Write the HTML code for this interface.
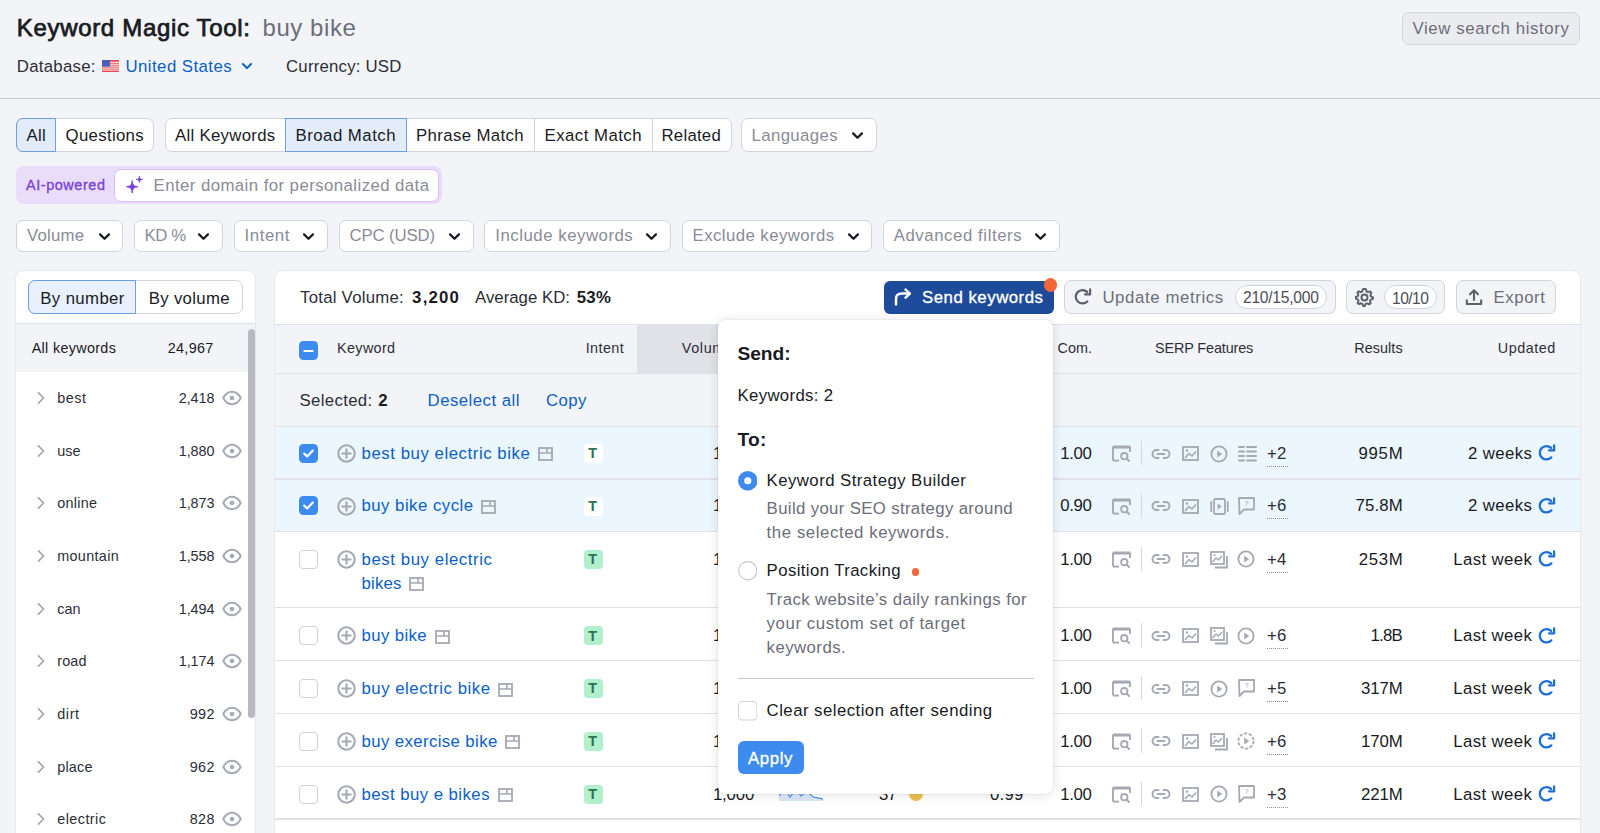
<!DOCTYPE html>
<html><head><meta charset="utf-8"><title>Keyword Magic Tool</title>
<style>
html,body{margin:0;padding:0;}
body{width:1600px;height:833px;overflow:hidden;position:relative;background:#f3f4f8;font-family:"Liberation Sans", sans-serif;}
</style></head><body>
<span id="t0" style="position:absolute;left:16.80px;top:8.200000000000003px;font-size:24px;line-height:40px;font-weight:400;color:#191b23;white-space:nowrap;letter-spacing:0.674px;-webkit-text-stroke:0.75px #191b23;">Keyword Magic Tool:</span>
<span id="t1" style="position:absolute;left:262.50px;top:8.200000000000003px;font-size:24px;line-height:40px;font-weight:400;color:#6c6e79;white-space:nowrap;letter-spacing:0.564px;">buy bike</span>
<span id="t2" style="position:absolute;left:16.80px;top:47.2px;font-size:16.8px;line-height:40px;font-weight:400;color:#2c2e37;white-space:nowrap;letter-spacing:0.278px;">Database:</span>
<svg style="position:absolute;left:102px;top:60px;" width="17" height="12" viewBox="0 0 17 12"><rect width="17" height="12" fill="#e84a4f"/><rect y="1.8" width="17" height="0.95" fill="#fff"/><rect y="3.75" width="17" height="0.95" fill="#fff"/><rect y="5.7" width="17" height="0.95" fill="#fff"/><rect y="7.65" width="17" height="0.95" fill="#fff"/><rect y="9.6" width="17" height="0.95" fill="#fff"/><rect width="8" height="6.6" fill="#4a5fb5"/></svg>
<span id="t3" style="position:absolute;left:125.50px;top:47.2px;font-size:16.8px;line-height:40px;font-weight:400;color:#0a5fc7;white-space:nowrap;letter-spacing:0.442px;">United States</span>
<svg style="position:absolute;left:241px;top:60px;" width="12" height="12" viewBox="0 0 12 12"><path d="M1.9 4 L6 8.1 L10.1 4" fill="none" stroke="#0a5fc7" stroke-width="2" stroke-linecap="round" stroke-linejoin="round"/></svg>
<span id="t4" style="position:absolute;left:286.00px;top:47.2px;font-size:16.8px;line-height:40px;font-weight:400;color:#2c2e37;white-space:nowrap;letter-spacing:0.212px;">Currency: USD</span>
<div style="position:absolute;left:1401.5px;top:12px;width:178.5px;height:33px;background:#ebecf0;border:1px solid #d3d5dc;border-radius:7px;box-sizing:border-box;"></div>
<span id="t5" style="position:absolute;left:1412.50px;top:9.399999999999999px;font-size:16.8px;line-height:40px;font-weight:400;color:#6c6e79;white-space:nowrap;letter-spacing:0.621px;">View search history</span>
<div style="position:absolute;left:0px;top:97.6px;width:1600px;height:1.6px;background:#c9cbd2;border-radius:0;box-sizing:border-box;"></div>
<div style="position:absolute;left:16.3px;top:118px;width:138.0px;height:34px;background:#fff;border:1px solid #d1d4db;border-radius:7px;box-sizing:border-box;"></div>
<div style="position:absolute;left:16.3px;top:118px;width:39.3px;height:34px;background:#e3ecfa;border:1px solid #6d9de6;border-radius:7px 0 0 7px;box-sizing:border-box;"></div>
<span id="t6" style="position:absolute;left:26.50px;top:115.6px;font-size:16.8px;line-height:40px;font-weight:400;color:#191b23;white-space:nowrap;letter-spacing:0.281px;">All</span>
<span id="t7" style="position:absolute;left:65.50px;top:115.6px;font-size:16.8px;line-height:40px;font-weight:400;color:#191b23;white-space:nowrap;letter-spacing:0.326px;">Questions</span>
<div style="position:absolute;left:164.6px;top:118px;width:567.0px;height:34px;background:#fff;border:1px solid #d1d4db;border-radius:7px;box-sizing:border-box;"></div>
<div style="position:absolute;left:285.3px;top:118px;width:121.30000000000001px;height:34px;background:#e3ecfa;border:1px solid #6d9de6;border-radius:0;box-sizing:border-box;"></div>
<div style="position:absolute;left:534.4px;top:118px;width:1px;height:34px;background:#d1d4db;border-radius:0;box-sizing:border-box;"></div>
<div style="position:absolute;left:651.7px;top:118px;width:1px;height:34px;background:#d1d4db;border-radius:0;box-sizing:border-box;"></div>
<span id="t8" style="position:absolute;left:175.00px;top:115.6px;font-size:16.8px;line-height:40px;font-weight:400;color:#191b23;white-space:nowrap;letter-spacing:0.292px;">All Keywords</span>
<span id="t9" style="position:absolute;left:295.50px;top:115.6px;font-size:16.8px;line-height:40px;font-weight:400;color:#191b23;white-space:nowrap;letter-spacing:0.487px;">Broad Match</span>
<span id="t10" style="position:absolute;left:416.00px;top:115.6px;font-size:16.8px;line-height:40px;font-weight:400;color:#191b23;white-space:nowrap;letter-spacing:0.372px;">Phrase Match</span>
<span id="t11" style="position:absolute;left:544.50px;top:115.6px;font-size:16.8px;line-height:40px;font-weight:400;color:#191b23;white-space:nowrap;letter-spacing:0.469px;">Exact Match</span>
<span id="t12" style="position:absolute;left:661.50px;top:115.6px;font-size:16.8px;line-height:40px;font-weight:400;color:#191b23;white-space:nowrap;letter-spacing:0.237px;">Related</span>
<div style="position:absolute;left:741.4px;top:118px;width:135.8px;height:34px;background:#fff;border:1px solid #d1d4db;border-radius:7px;box-sizing:border-box;"></div>
<span id="t13" style="position:absolute;left:751.50px;top:115.6px;font-size:16.8px;line-height:40px;font-weight:400;color:#8a8c96;white-space:nowrap;letter-spacing:0.382px;">Languages</span>
<svg style="position:absolute;left:850.5px;top:129px;" width="13" height="13" viewBox="0 0 12 12"><path d="M1.9 4 L6 8.1 L10.1 4" fill="none" stroke="#191b23" stroke-width="2.1" stroke-linecap="round" stroke-linejoin="round"/></svg>
<div style="position:absolute;left:16.3px;top:166px;width:425.4px;height:38px;background:#eadcfb;border-radius:8px;box-sizing:border-box;"></div>
<span id="t14" style="position:absolute;left:26.00px;top:164.5px;font-size:14.4px;line-height:40px;font-weight:400;color:#7942d6;white-space:nowrap;letter-spacing:0.591px;-webkit-text-stroke:0.35px #7942d6;">AI-powered</span>
<div style="position:absolute;left:114px;top:169px;width:325px;height:32.5px;background:#fff;border:1.5px solid #d9bdf8;border-radius:7px;box-sizing:border-box;"></div>
<svg style="position:absolute;left:124.5px;top:175px;" width="19" height="19" viewBox="0 0 19 19"><path d="M7.2 5.6 C7.7 10 8.6 11.2 13 11.8 C8.6 12.4 7.7 13.6 7.2 18 C6.7 13.6 5.8 12.4 1.4 11.8 C5.8 11.2 6.7 10 7.2 5.6 Z" fill="#7942d6" stroke="#7942d6" stroke-width="0.9" stroke-linejoin="round"/><path d="M14.4 1.2 C14.7 3.6 15.2 4.1 17.6 4.4 C15.2 4.7 14.7 5.2 14.4 7.6 C14.1 5.2 13.6 4.7 11.2 4.4 C13.6 4.1 14.1 3.6 14.4 1.2 Z" fill="#7942d6" stroke="#7942d6" stroke-width="0.8" stroke-linejoin="round"/></svg>
<span id="t15" style="position:absolute;left:153.50px;top:166px;font-size:16.8px;line-height:40px;font-weight:400;color:#8a8c96;white-space:nowrap;letter-spacing:0.435px;">Enter domain for personalized data</span>
<div style="position:absolute;left:15.9px;top:219.5px;width:107.6px;height:32.5px;background:#fff;border:1px solid #d1d4db;border-radius:7px;box-sizing:border-box;"></div>
<span id="t16" style="position:absolute;left:26.90px;top:215.8px;font-size:16.8px;line-height:40px;font-weight:400;color:#8a8c96;white-space:nowrap;letter-spacing:0.253px;">Volume</span>
<svg style="position:absolute;left:97.5px;top:229.5px;" width="13" height="13" viewBox="0 0 12 12"><path d="M1.9 4 L6 8.1 L10.1 4" fill="none" stroke="#191b23" stroke-width="2.1" stroke-linecap="round" stroke-linejoin="round"/></svg>
<div style="position:absolute;left:133.6px;top:219.5px;width:89.80000000000001px;height:32.5px;background:#fff;border:1px solid #d1d4db;border-radius:7px;box-sizing:border-box;"></div>
<span id="t17" style="position:absolute;left:144.60px;top:215.8px;font-size:16.8px;line-height:40px;font-weight:400;color:#8a8c96;white-space:nowrap;letter-spacing:-0.477px;">KD %</span>
<svg style="position:absolute;left:197.4px;top:229.5px;" width="13" height="13" viewBox="0 0 12 12"><path d="M1.9 4 L6 8.1 L10.1 4" fill="none" stroke="#191b23" stroke-width="2.1" stroke-linecap="round" stroke-linejoin="round"/></svg>
<div style="position:absolute;left:233.5px;top:219.5px;width:94.5px;height:32.5px;background:#fff;border:1px solid #d1d4db;border-radius:7px;box-sizing:border-box;"></div>
<span id="t18" style="position:absolute;left:244.50px;top:215.8px;font-size:16.8px;line-height:40px;font-weight:400;color:#8a8c96;white-space:nowrap;letter-spacing:0.583px;">Intent</span>
<svg style="position:absolute;left:302px;top:229.5px;" width="13" height="13" viewBox="0 0 12 12"><path d="M1.9 4 L6 8.1 L10.1 4" fill="none" stroke="#191b23" stroke-width="2.1" stroke-linecap="round" stroke-linejoin="round"/></svg>
<div style="position:absolute;left:338.5px;top:219.5px;width:135.3px;height:32.5px;background:#fff;border:1px solid #d1d4db;border-radius:7px;box-sizing:border-box;"></div>
<span id="t19" style="position:absolute;left:349.50px;top:215.8px;font-size:16.8px;line-height:40px;font-weight:400;color:#8a8c96;white-space:nowrap;letter-spacing:-0.134px;">CPC (USD)</span>
<svg style="position:absolute;left:447.8px;top:229.5px;" width="13" height="13" viewBox="0 0 12 12"><path d="M1.9 4 L6 8.1 L10.1 4" fill="none" stroke="#191b23" stroke-width="2.1" stroke-linecap="round" stroke-linejoin="round"/></svg>
<div style="position:absolute;left:484.3px;top:219.5px;width:186.3px;height:32.5px;background:#fff;border:1px solid #d1d4db;border-radius:7px;box-sizing:border-box;"></div>
<span id="t20" style="position:absolute;left:495.30px;top:215.8px;font-size:16.8px;line-height:40px;font-weight:400;color:#8a8c96;white-space:nowrap;letter-spacing:0.521px;">Include keywords</span>
<svg style="position:absolute;left:644.6px;top:229.5px;" width="13" height="13" viewBox="0 0 12 12"><path d="M1.9 4 L6 8.1 L10.1 4" fill="none" stroke="#191b23" stroke-width="2.1" stroke-linecap="round" stroke-linejoin="round"/></svg>
<div style="position:absolute;left:681.6px;top:219.5px;width:190.89999999999998px;height:32.5px;background:#fff;border:1px solid #d1d4db;border-radius:7px;box-sizing:border-box;"></div>
<span id="t21" style="position:absolute;left:692.60px;top:215.8px;font-size:16.8px;line-height:40px;font-weight:400;color:#8a8c96;white-space:nowrap;letter-spacing:0.422px;">Exclude keywords</span>
<svg style="position:absolute;left:846.5px;top:229.5px;" width="13" height="13" viewBox="0 0 12 12"><path d="M1.9 4 L6 8.1 L10.1 4" fill="none" stroke="#191b23" stroke-width="2.1" stroke-linecap="round" stroke-linejoin="round"/></svg>
<div style="position:absolute;left:882.7px;top:219.5px;width:177.5px;height:32.5px;background:#fff;border:1px solid #d1d4db;border-radius:7px;box-sizing:border-box;"></div>
<span id="t22" style="position:absolute;left:893.70px;top:215.8px;font-size:16.8px;line-height:40px;font-weight:400;color:#8a8c96;white-space:nowrap;letter-spacing:0.568px;">Advanced filters</span>
<svg style="position:absolute;left:1034.2px;top:229.5px;" width="13" height="13" viewBox="0 0 12 12"><path d="M1.9 4 L6 8.1 L10.1 4" fill="none" stroke="#191b23" stroke-width="2.1" stroke-linecap="round" stroke-linejoin="round"/></svg>
<div style="position:absolute;left:16.2px;top:271px;width:239px;height:600px;background:#fff;border-radius:8px 8px 0 0;box-sizing:border-box;box-shadow:0 0 0 1px #e7e8ee;"></div>
<div style="position:absolute;left:28.4px;top:280.4px;width:214.2px;height:34.1px;background:#fff;border:1px solid #d1d4db;border-radius:7px;box-sizing:border-box;"></div>
<div style="position:absolute;left:28.4px;top:280.4px;width:108px;height:34.1px;background:#e8f1fd;border:1px solid #6d9de6;border-radius:7px 0 0 7px;box-sizing:border-box;"></div>
<span id="t23" style="position:absolute;left:40.30px;top:278.5px;font-size:16.8px;line-height:40px;font-weight:400;color:#191b23;white-space:nowrap;letter-spacing:0.372px;">By number</span>
<span id="t24" style="position:absolute;left:148.80px;top:278.5px;font-size:16.8px;line-height:40px;font-weight:400;color:#191b23;white-space:nowrap;letter-spacing:0.295px;">By volume</span>
<div style="position:absolute;left:16.2px;top:323px;width:239px;height:1px;background:#e0e1e9;border-radius:0;box-sizing:border-box;"></div>
<div style="position:absolute;left:16.2px;top:324px;width:239px;height:48px;background:#f3f4f8;border-radius:0;box-sizing:border-box;"></div>
<span id="t25" style="position:absolute;left:31.70px;top:328.3px;font-size:14.4px;line-height:40px;font-weight:400;color:#191b23;white-space:nowrap;letter-spacing:0.310px;">All keywords</span>
<span id="t26" style="position:absolute;right:1386.52px;top:328.3px;font-size:14.4px;line-height:40px;font-weight:400;color:#191b23;white-space:nowrap;letter-spacing:0.281px;">24,967</span>
<svg style="position:absolute;left:36px;top:391.1px;" width="10" height="14" viewBox="0 0 10 14"><path d="M2.5 1.8 L7.5 7 L2.5 12.2" fill="none" stroke="#a6a8b3" stroke-width="1.8" stroke-linecap="round" stroke-linejoin="round"/></svg>
<span id="t27" style="position:absolute;left:57.20px;top:378.1px;font-size:14.4px;line-height:40px;font-weight:400;color:#2c2e37;white-space:nowrap;letter-spacing:0.499px;">best</span>
<span id="t28" style="position:absolute;right:1385.54px;top:378.1px;font-size:14.4px;line-height:40px;font-weight:400;color:#2c2e37;white-space:nowrap;letter-spacing:-0.043px;">2,418</span>
<svg style="position:absolute;left:222.3px;top:390.1px;" width="20" height="16" viewBox="0 0 20 16"><path d="M1.3 8 C3.5 3.6 6.5 1.8 10 1.8 C13.5 1.8 16.5 3.6 18.7 8 C16.5 12.4 13.5 14.2 10 14.2 C6.5 14.2 3.5 12.4 1.3 8 Z" fill="none" stroke="#a6a8b3" stroke-width="1.9"/><circle cx="10" cy="8" r="2.3" fill="#a6a8b3"/></svg>
<svg style="position:absolute;left:36px;top:443.75px;" width="10" height="14" viewBox="0 0 10 14"><path d="M2.5 1.8 L7.5 7 L2.5 12.2" fill="none" stroke="#a6a8b3" stroke-width="1.8" stroke-linecap="round" stroke-linejoin="round"/></svg>
<span id="t29" style="position:absolute;left:57.20px;top:430.75px;font-size:14.4px;line-height:40px;font-weight:400;color:#2c2e37;white-space:nowrap;letter-spacing:0.066px;">use</span>
<span id="t30" style="position:absolute;right:1385.54px;top:430.75px;font-size:14.4px;line-height:40px;font-weight:400;color:#2c2e37;white-space:nowrap;letter-spacing:-0.043px;">1,880</span>
<svg style="position:absolute;left:222.3px;top:442.75px;" width="20" height="16" viewBox="0 0 20 16"><path d="M1.3 8 C3.5 3.6 6.5 1.8 10 1.8 C13.5 1.8 16.5 3.6 18.7 8 C16.5 12.4 13.5 14.2 10 14.2 C6.5 14.2 3.5 12.4 1.3 8 Z" fill="none" stroke="#a6a8b3" stroke-width="1.9"/><circle cx="10" cy="8" r="2.3" fill="#a6a8b3"/></svg>
<svg style="position:absolute;left:36px;top:496.40000000000003px;" width="10" height="14" viewBox="0 0 10 14"><path d="M2.5 1.8 L7.5 7 L2.5 12.2" fill="none" stroke="#a6a8b3" stroke-width="1.8" stroke-linecap="round" stroke-linejoin="round"/></svg>
<span id="t31" style="position:absolute;left:57.20px;top:483.40000000000003px;font-size:14.4px;line-height:40px;font-weight:400;color:#2c2e37;white-space:nowrap;letter-spacing:0.263px;">online</span>
<span id="t32" style="position:absolute;right:1385.54px;top:483.40000000000003px;font-size:14.4px;line-height:40px;font-weight:400;color:#2c2e37;white-space:nowrap;letter-spacing:-0.043px;">1,873</span>
<svg style="position:absolute;left:222.3px;top:495.40000000000003px;" width="20" height="16" viewBox="0 0 20 16"><path d="M1.3 8 C3.5 3.6 6.5 1.8 10 1.8 C13.5 1.8 16.5 3.6 18.7 8 C16.5 12.4 13.5 14.2 10 14.2 C6.5 14.2 3.5 12.4 1.3 8 Z" fill="none" stroke="#a6a8b3" stroke-width="1.9"/><circle cx="10" cy="8" r="2.3" fill="#a6a8b3"/></svg>
<svg style="position:absolute;left:36px;top:549.05px;" width="10" height="14" viewBox="0 0 10 14"><path d="M2.5 1.8 L7.5 7 L2.5 12.2" fill="none" stroke="#a6a8b3" stroke-width="1.8" stroke-linecap="round" stroke-linejoin="round"/></svg>
<span id="t33" style="position:absolute;left:57.20px;top:536.05px;font-size:14.4px;line-height:40px;font-weight:400;color:#2c2e37;white-space:nowrap;letter-spacing:0.337px;">mountain</span>
<span id="t34" style="position:absolute;right:1385.54px;top:536.05px;font-size:14.4px;line-height:40px;font-weight:400;color:#2c2e37;white-space:nowrap;letter-spacing:-0.043px;">1,558</span>
<svg style="position:absolute;left:222.3px;top:548.05px;" width="20" height="16" viewBox="0 0 20 16"><path d="M1.3 8 C3.5 3.6 6.5 1.8 10 1.8 C13.5 1.8 16.5 3.6 18.7 8 C16.5 12.4 13.5 14.2 10 14.2 C6.5 14.2 3.5 12.4 1.3 8 Z" fill="none" stroke="#a6a8b3" stroke-width="1.9"/><circle cx="10" cy="8" r="2.3" fill="#a6a8b3"/></svg>
<svg style="position:absolute;left:36px;top:601.7px;" width="10" height="14" viewBox="0 0 10 14"><path d="M2.5 1.8 L7.5 7 L2.5 12.2" fill="none" stroke="#a6a8b3" stroke-width="1.8" stroke-linecap="round" stroke-linejoin="round"/></svg>
<span id="t35" style="position:absolute;left:57.20px;top:588.7px;font-size:14.4px;line-height:40px;font-weight:400;color:#2c2e37;white-space:nowrap;letter-spacing:-0.001px;">can</span>
<span id="t36" style="position:absolute;right:1385.54px;top:588.7px;font-size:14.4px;line-height:40px;font-weight:400;color:#2c2e37;white-space:nowrap;letter-spacing:-0.043px;">1,494</span>
<svg style="position:absolute;left:222.3px;top:600.7px;" width="20" height="16" viewBox="0 0 20 16"><path d="M1.3 8 C3.5 3.6 6.5 1.8 10 1.8 C13.5 1.8 16.5 3.6 18.7 8 C16.5 12.4 13.5 14.2 10 14.2 C6.5 14.2 3.5 12.4 1.3 8 Z" fill="none" stroke="#a6a8b3" stroke-width="1.9"/><circle cx="10" cy="8" r="2.3" fill="#a6a8b3"/></svg>
<svg style="position:absolute;left:36px;top:654.35px;" width="10" height="14" viewBox="0 0 10 14"><path d="M2.5 1.8 L7.5 7 L2.5 12.2" fill="none" stroke="#a6a8b3" stroke-width="1.8" stroke-linecap="round" stroke-linejoin="round"/></svg>
<span id="t37" style="position:absolute;left:57.20px;top:641.35px;font-size:14.4px;line-height:40px;font-weight:400;color:#2c2e37;white-space:nowrap;letter-spacing:0.172px;">road</span>
<span id="t38" style="position:absolute;right:1385.54px;top:641.35px;font-size:14.4px;line-height:40px;font-weight:400;color:#2c2e37;white-space:nowrap;letter-spacing:-0.043px;">1,174</span>
<svg style="position:absolute;left:222.3px;top:653.35px;" width="20" height="16" viewBox="0 0 20 16"><path d="M1.3 8 C3.5 3.6 6.5 1.8 10 1.8 C13.5 1.8 16.5 3.6 18.7 8 C16.5 12.4 13.5 14.2 10 14.2 C6.5 14.2 3.5 12.4 1.3 8 Z" fill="none" stroke="#a6a8b3" stroke-width="1.9"/><circle cx="10" cy="8" r="2.3" fill="#a6a8b3"/></svg>
<svg style="position:absolute;left:36px;top:707.0px;" width="10" height="14" viewBox="0 0 10 14"><path d="M2.5 1.8 L7.5 7 L2.5 12.2" fill="none" stroke="#a6a8b3" stroke-width="1.8" stroke-linecap="round" stroke-linejoin="round"/></svg>
<span id="t39" style="position:absolute;left:57.20px;top:694.0px;font-size:14.4px;line-height:40px;font-weight:400;color:#2c2e37;white-space:nowrap;letter-spacing:0.625px;">dirt</span>
<span id="t40" style="position:absolute;right:1385.07px;top:694.0px;font-size:14.4px;line-height:40px;font-weight:400;color:#2c2e37;white-space:nowrap;letter-spacing:0.428px;">992</span>
<svg style="position:absolute;left:222.3px;top:706.0px;" width="20" height="16" viewBox="0 0 20 16"><path d="M1.3 8 C3.5 3.6 6.5 1.8 10 1.8 C13.5 1.8 16.5 3.6 18.7 8 C16.5 12.4 13.5 14.2 10 14.2 C6.5 14.2 3.5 12.4 1.3 8 Z" fill="none" stroke="#a6a8b3" stroke-width="1.9"/><circle cx="10" cy="8" r="2.3" fill="#a6a8b3"/></svg>
<svg style="position:absolute;left:36px;top:759.6500000000001px;" width="10" height="14" viewBox="0 0 10 14"><path d="M2.5 1.8 L7.5 7 L2.5 12.2" fill="none" stroke="#a6a8b3" stroke-width="1.8" stroke-linecap="round" stroke-linejoin="round"/></svg>
<span id="t41" style="position:absolute;left:57.20px;top:746.6500000000001px;font-size:14.4px;line-height:40px;font-weight:400;color:#2c2e37;white-space:nowrap;letter-spacing:0.219px;">place</span>
<span id="t42" style="position:absolute;right:1385.07px;top:746.6500000000001px;font-size:14.4px;line-height:40px;font-weight:400;color:#2c2e37;white-space:nowrap;letter-spacing:0.428px;">962</span>
<svg style="position:absolute;left:222.3px;top:758.6500000000001px;" width="20" height="16" viewBox="0 0 20 16"><path d="M1.3 8 C3.5 3.6 6.5 1.8 10 1.8 C13.5 1.8 16.5 3.6 18.7 8 C16.5 12.4 13.5 14.2 10 14.2 C6.5 14.2 3.5 12.4 1.3 8 Z" fill="none" stroke="#a6a8b3" stroke-width="1.9"/><circle cx="10" cy="8" r="2.3" fill="#a6a8b3"/></svg>
<svg style="position:absolute;left:36px;top:812.3px;" width="10" height="14" viewBox="0 0 10 14"><path d="M2.5 1.8 L7.5 7 L2.5 12.2" fill="none" stroke="#a6a8b3" stroke-width="1.8" stroke-linecap="round" stroke-linejoin="round"/></svg>
<span id="t43" style="position:absolute;left:57.20px;top:799.3px;font-size:14.4px;line-height:40px;font-weight:400;color:#2c2e37;white-space:nowrap;letter-spacing:0.451px;">electric</span>
<span id="t44" style="position:absolute;right:1385.07px;top:799.3px;font-size:14.4px;line-height:40px;font-weight:400;color:#2c2e37;white-space:nowrap;letter-spacing:0.428px;">828</span>
<svg style="position:absolute;left:222.3px;top:811.3px;" width="20" height="16" viewBox="0 0 20 16"><path d="M1.3 8 C3.5 3.6 6.5 1.8 10 1.8 C13.5 1.8 16.5 3.6 18.7 8 C16.5 12.4 13.5 14.2 10 14.2 C6.5 14.2 3.5 12.4 1.3 8 Z" fill="none" stroke="#a6a8b3" stroke-width="1.9"/><circle cx="10" cy="8" r="2.3" fill="#a6a8b3"/></svg>
<div style="position:absolute;left:247.5px;top:328.5px;width:7px;height:389px;background:#b9bac1;border-radius:4px;box-sizing:border-box;"></div>
<div style="position:absolute;left:274.8px;top:271px;width:1305.3px;height:600px;background:#fff;border-radius:8px 8px 0 0;box-sizing:border-box;box-shadow:0 0 0 1px #e7e8ee;"></div>
<span id="t45" style="position:absolute;left:300.00px;top:278.3px;font-size:16.8px;line-height:40px;font-weight:400;color:#2c2e37;white-space:nowrap;letter-spacing:0.250px;">Total Volume:</span>
<span id="t46" style="position:absolute;right:1139.90px;top:278.3px;font-size:16.8px;line-height:40px;font-weight:700;color:#191b23;white-space:nowrap;letter-spacing:1.200px;">3,200</span>
<span id="t47" style="position:absolute;left:475.00px;top:278.3px;font-size:16.8px;line-height:40px;font-weight:400;color:#2c2e37;white-space:nowrap;letter-spacing:0.014px;">Average KD:</span>
<span id="t48" style="position:absolute;right:988.93px;top:278.3px;font-size:16.8px;line-height:40px;font-weight:700;color:#191b23;white-space:nowrap;letter-spacing:0.269px;">53%</span>
<div style="position:absolute;left:883.9px;top:280.9px;width:170.4px;height:33px;background:#1e4a9a;border-radius:6px;box-sizing:border-box;"></div>
<svg style="position:absolute;left:892.5px;top:288px;" width="20" height="18" viewBox="0 0 20 18"><path d="M3 16.5 V11 C3 7.6 5.3 5.6 9 5.6 H16.5" fill="none" stroke="#fff" stroke-width="2.5" stroke-linecap="round"/><path d="M12.6 1.6 L16.8 5.6 L12.6 9.6" fill="none" stroke="#fff" stroke-width="2.5" stroke-linecap="round" stroke-linejoin="round"/></svg>
<span id="t49" style="position:absolute;left:922.00px;top:278.3px;font-size:16.8px;line-height:40px;font-weight:400;color:#fff;white-space:nowrap;letter-spacing:0.520px;-webkit-text-stroke:0.35px #fff;">Send keywords</span>
<div style="position:absolute;left:1043.5px;top:278.3px;width:13.5px;height:13.5px;background:#f0683a;border-radius:50%;box-sizing:border-box;"></div>
<div style="position:absolute;left:1064.3px;top:280.4px;width:272.1px;height:34px;background:#f3f4f8;border:1px solid #d1d4db;border-radius:7px;box-sizing:border-box;"></div>
<svg style="position:absolute;left:1074px;top:288px;" width="18" height="18" viewBox="0 0 18 18"><path d="M13.1 3.9 A6.7 6.7 0 1 0 13.3 13.4" fill="none" stroke="#5e6069" stroke-width="2.2" stroke-linecap="round"/><path d="M16.1 1.4 V6.4 H11.1" fill="none" stroke="#5e6069" stroke-width="2.2" stroke-linecap="round" stroke-linejoin="round"/></svg>
<span id="t50" style="position:absolute;left:1102.40px;top:278.3px;font-size:16.8px;line-height:40px;font-weight:400;color:#6c6e79;white-space:nowrap;letter-spacing:0.610px;">Update metrics</span>
<div style="position:absolute;left:1235.4px;top:285.4px;width:91.5px;height:24px;background:#fff;border:1px solid #d1d4db;border-radius:12px;box-sizing:border-box;"></div>
<span id="t51" style="position:absolute;left:1243.00px;top:278px;font-size:15.6px;line-height:40px;font-weight:400;color:#4b4d57;white-space:nowrap;letter-spacing:-0.245px;">210/15,000</span>
<div style="position:absolute;left:1346.4px;top:280.4px;width:98.8px;height:34px;background:#f3f4f8;border:1px solid #d1d4db;border-radius:7px;box-sizing:border-box;"></div>
<svg style="position:absolute;left:1355px;top:287.5px;" width="19" height="19" viewBox="0 0 19 19"><path d="M9.5 1.6 L11.2 1.9 L11.7 4.2 L13.2 5 L15.4 4.2 L16.6 5.5 L15.7 7.7 L16.3 9.3 L18.4 10.2 L18.2 11.9 L16 12.6 L15.2 14.1 L16 16.3 L14.6 17.4 L12.5 16.4 L10.9 17 L10 19 H8.3 L7.6 17 L6 16.3 L3.9 17.2 L2.7 16 L3.6 13.9 L2.9 12.3 L0.8 11.6 L0.7 9.9 L2.9 9 L3.5 7.4 L2.5 5.3 L3.7 4.1 L5.8 5 L7.3 4.3 L8 2 Z" transform="translate(0,-0.7) scale(0.98)" fill="none" stroke="#5e6069" stroke-width="2" stroke-linejoin="round"/><circle cx="9.5" cy="9.6" r="3" fill="none" stroke="#5e6069" stroke-width="2"/></svg>
<div style="position:absolute;left:1383.9px;top:285.4px;width:52.7px;height:24px;background:#fff;border:1px solid #d1d4db;border-radius:12px;box-sizing:border-box;"></div>
<span id="t52" style="position:absolute;left:1392.00px;top:278.5px;font-size:15.6px;line-height:40px;font-weight:400;color:#4b4d57;white-space:nowrap;letter-spacing:-0.546px;">10/10</span>
<div style="position:absolute;left:1455.6px;top:280.4px;width:100px;height:34px;background:#f3f4f8;border:1px solid #d1d4db;border-radius:7px;box-sizing:border-box;"></div>
<svg style="position:absolute;left:1465px;top:288px;" width="18" height="18" viewBox="0 0 18 18"><path d="M9 12 V2.5 M5 6.3 L9 2.3 L13 6.3" fill="none" stroke="#5e6069" stroke-width="2.1" stroke-linecap="round" stroke-linejoin="round"/><path d="M1.8 11.5 V16 H16.2 V11.5" fill="none" stroke="#5e6069" stroke-width="2.1" stroke-linejoin="round"/></svg>
<span id="t53" style="position:absolute;left:1493.60px;top:278.3px;font-size:16.8px;line-height:40px;font-weight:400;color:#6c6e79;white-space:nowrap;letter-spacing:0.547px;">Export</span>
<div style="position:absolute;left:274.8px;top:323.8px;width:1305.3px;height:1px;background:#e0e1e9;border-radius:0;box-sizing:border-box;"></div>
<div style="position:absolute;left:274.8px;top:324.5px;width:1305.3px;height:49px;background:#f3f4f8;border-radius:0;box-sizing:border-box;"></div>
<div style="position:absolute;left:636.5px;top:324.5px;width:120px;height:49px;background:#e1e2e8;border-radius:0;box-sizing:border-box;"></div>
<div style="position:absolute;left:274.8px;top:373px;width:1305.3px;height:1px;background:#e0e1e9;border-radius:0;box-sizing:border-box;"></div>
<svg style="position:absolute;left:298.75px;top:340.75px;" width="19" height="19" viewBox="0 0 19 19"><rect x="0" y="0" width="19" height="19" rx="4.5" fill="#3d8bef"/><path d="M5.3 10 L13.7 10" fill="none" stroke="#fff" stroke-width="2" stroke-linecap="round"/></svg>
<span id="t54" style="position:absolute;left:337.10px;top:328.3px;font-size:14.4px;line-height:40px;font-weight:400;color:#2c2e37;white-space:nowrap;letter-spacing:0.329px;">Keyword</span>
<span id="t55" style="position:absolute;left:585.70px;top:328.3px;font-size:14.4px;line-height:40px;font-weight:400;color:#2c2e37;white-space:nowrap;letter-spacing:0.414px;">Intent</span>
<span id="t56" style="position:absolute;left:681.70px;top:328.3px;font-size:14.4px;line-height:40px;font-weight:400;color:#2c2e37;white-space:nowrap;letter-spacing:0.667px;">Volume</span>
<span id="t57" style="position:absolute;left:1057.50px;top:328.3px;font-size:14.4px;line-height:40px;font-weight:400;color:#2c2e37;white-space:nowrap;letter-spacing:0.027px;">Com.</span>
<span id="t58" style="position:absolute;left:1155.00px;top:328.3px;font-size:14.4px;line-height:40px;font-weight:400;color:#2c2e37;white-space:nowrap;letter-spacing:-0.117px;">SERP Features</span>
<span id="t59" style="position:absolute;left:1354.30px;top:328.3px;font-size:14.4px;line-height:40px;font-weight:400;color:#2c2e37;white-space:nowrap;letter-spacing:0.057px;">Results</span>
<span id="t60" style="position:absolute;left:1497.80px;top:328.3px;font-size:14.4px;line-height:40px;font-weight:400;color:#2c2e37;white-space:nowrap;letter-spacing:0.511px;">Updated</span>
<div style="position:absolute;left:274.8px;top:374px;width:1305.3px;height:52px;background:#f3f4f8;border-radius:0;box-sizing:border-box;"></div>
<span id="t61" style="position:absolute;left:299.50px;top:380.8px;font-size:16.8px;line-height:40px;font-weight:400;color:#2c2e37;white-space:nowrap;letter-spacing:0.337px;">Selected:</span>
<span id="t62" style="position:absolute;right:1212.40px;top:380.8px;font-size:16.8px;line-height:40px;font-weight:700;color:#191b23;white-space:nowrap;">2</span>
<span id="t63" style="position:absolute;left:427.60px;top:380.8px;font-size:16.8px;line-height:40px;font-weight:400;color:#0a5fc7;white-space:nowrap;letter-spacing:0.462px;">Deselect all</span>
<span id="t64" style="position:absolute;left:546.00px;top:380.8px;font-size:16.8px;line-height:40px;font-weight:400;color:#0a5fc7;white-space:nowrap;letter-spacing:0.403px;">Copy</span>
<div style="position:absolute;left:274.8px;top:426px;width:1305.3px;height:1px;background:#e0e1e9;border-radius:0;box-sizing:border-box;"></div>
<div style="position:absolute;left:274.8px;top:427.0px;width:1305.3px;height:52.5px;background:#ebf6fe;border-radius:0;box-sizing:border-box;"></div>
<div style="position:absolute;left:274.8px;top:478.35px;width:1305.3px;height:1.3px;background:#e0e1e9;border-radius:0;box-sizing:border-box;"></div>
<svg style="position:absolute;left:298.75px;top:443.9px;" width="19" height="19" viewBox="0 0 19 19"><rect x="0" y="0" width="19" height="19" rx="4.5" fill="#3d8bef"/><path d="M5.2 9.6 L8.2 12.4 L13.8 6.6" fill="none" stroke="#fff" stroke-width="2.2" stroke-linecap="round" stroke-linejoin="round"/></svg>
<svg style="position:absolute;left:337px;top:444.0px;" width="19" height="19" viewBox="0 0 19 19"><circle cx="9.5" cy="9.5" r="8.2" fill="none" stroke="#a6a8b3" stroke-width="2.1"/><path d="M9.5 5.3 V13.7 M5.3 9.5 H13.7" stroke="#a6a8b3" stroke-width="2.1" stroke-linecap="round"/></svg>
<span id="t65" style="position:absolute;left:361.50px;top:433.9px;font-size:16.8px;line-height:40px;font-weight:400;color:#0a5fc7;white-space:nowrap;letter-spacing:0.550px;">best buy electric bike</span>
<svg style="position:absolute;left:537.8px;top:447.4px;" width="15" height="14" viewBox="0 0 15 14"><rect x="1" y="1" width="13" height="12" fill="none" stroke="#a6a8b3" stroke-width="1.8"/><path d="M1 6 H14 M9 1 V6" stroke="#a6a8b3" stroke-width="1.6"/></svg>
<div style="position:absolute;left:584px;top:444.0px;width:18.5px;height:19px;background:#fff;border-radius:4px;box-sizing:border-box;"></div>
<span id="t66" style="position:absolute;left:588.30px;top:433.29999999999995px;font-size:14.4px;line-height:40px;font-weight:700;color:#2b7458;white-space:nowrap;">T</span>
<span id="t67" style="position:absolute;right:845.84px;top:433.9px;font-size:16.8px;line-height:40px;font-weight:400;color:#191b23;white-space:nowrap;letter-spacing:-0.140px;">1,000</span>
<svg style="position:absolute;left:779px;top:443.9px;" width="44" height="16" viewBox="0 0 44 16"><path d="M0 16 L0 11 L6 3 L11 12 L17 4 L22 11 L28 6 L34 12 L44 14 L44 16 Z" fill="#dbe8f8"/><path d="M0 11 L6 3 L11 12 L17 4 L22 11 L28 6 L34 12 L44 14" fill="none" stroke="#5d9ae8" stroke-width="1.3"/></svg>
<span id="t68" style="position:absolute;right:703.59px;top:433.9px;font-size:16.8px;line-height:40px;font-weight:400;color:#191b23;white-space:nowrap;letter-spacing:-0.586px;">37</span>
<div style="position:absolute;left:908.6px;top:445.7px;width:14.2px;height:14.2px;background:#ecc04e;border-radius:50%;box-sizing:border-box;"></div>
<span id="t69" style="position:absolute;right:576.47px;top:433.9px;font-size:16.8px;line-height:40px;font-weight:400;color:#191b23;white-space:nowrap;letter-spacing:0.232px;">0.99</span>
<span id="t70" style="position:absolute;right:508.54px;top:433.9px;font-size:16.8px;line-height:40px;font-weight:400;color:#191b23;white-space:nowrap;letter-spacing:-0.343px;">1.00</span>
<svg style="position:absolute;left:1111.6px;top:445.0px;" width="19" height="17" viewBox="0 0 19 17"><path d="M1 15.5 V2.5 H18 V7" fill="none" stroke="#a6a8b3" stroke-width="1.9"/><path d="M1 1.8 H18" stroke="#a6a8b3" stroke-width="2.6"/><path d="M1 15.6 H7" stroke="#a6a8b3" stroke-width="1.9"/><circle cx="12.3" cy="11.2" r="3.2" fill="none" stroke="#a6a8b3" stroke-width="1.8"/><path d="M14.6 13.5 L17 16" stroke="#a6a8b3" stroke-width="1.9" stroke-linecap="round"/></svg>
<div style="position:absolute;left:1140.5px;top:441.0px;width:1.4px;height:24px;background:#d6d8de;border-radius:0;box-sizing:border-box;"></div>
<svg style="position:absolute;left:1151px;top:447.5px;" width="20" height="12" viewBox="0 0 20 12"><path d="M7.5 2 H5.5 A4 4 0 0 0 5.5 10 H7.5 M12.5 2 H14.5 A4 4 0 0 1 14.5 10 H12.5 M6.5 6 H13.5" fill="none" stroke="#a6a8b3" stroke-width="1.9" stroke-linecap="round"/></svg>
<svg style="position:absolute;left:1181.6px;top:446.0px;" width="17" height="15" viewBox="0 0 17 15"><rect x="1" y="1" width="15" height="13" fill="none" stroke="#a6a8b3" stroke-width="1.8"/><path d="M3 12 L7 7.5 L10 10 L14 5.5" fill="none" stroke="#a6a8b3" stroke-width="1.6"/><circle cx="5" cy="4.5" r="1.2" fill="#a6a8b3"/></svg>
<svg style="position:absolute;left:1209.5px;top:444.5px;" width="18" height="18" viewBox="0 0 18 18"><circle cx="9" cy="9" r="7.6" fill="none" stroke="#a6a8b3" stroke-width="1.8"/><path d="M7.2 5.6 L12.2 9 L7.2 12.4 Z" fill="#a6a8b3"/></svg>
<svg style="position:absolute;left:1237.6px;top:445.0px;" width="19" height="17" viewBox="0 0 19 17"><path d="M1 2 H6 M9 2 H18" stroke="#a6a8b3" stroke-width="2" stroke-linecap="round"/><path d="M1 6.5 H6 M9 6.5 H18" stroke="#a6a8b3" stroke-width="2" stroke-linecap="round"/><path d="M1 11 H6 M9 11 H18" stroke="#a6a8b3" stroke-width="2" stroke-linecap="round"/><path d="M1 15.5 H6 M9 15.5 H18" stroke="#a6a8b3" stroke-width="2" stroke-linecap="round"/></svg>
<span id="t71" style="position:absolute;left:1267.00px;top:433.9px;font-size:16.8px;line-height:40px;font-weight:400;color:#2c2e37;white-space:nowrap;letter-spacing:0.180px;">+2</span>
<div style="position:absolute;left:1267px;top:465.9px;width:21px;height:0;border-top:1.2px dotted #8a8c96"></div>
<span id="t72" style="position:absolute;right:196.52px;top:433.9px;font-size:16.8px;line-height:40px;font-weight:400;color:#191b23;white-space:nowrap;letter-spacing:0.779px;">995M</span>
<span id="t73" style="position:absolute;right:67.81px;top:433.9px;font-size:16.8px;line-height:40px;font-weight:400;color:#191b23;white-space:nowrap;letter-spacing:0.391px;">2 weeks</span>
<svg style="position:absolute;left:1537.8px;top:444.3px;" width="18" height="18" viewBox="0 0 18 18"><path d="M13.1 3.9 A6.7 6.7 0 1 0 13.3 13.4" fill="none" stroke="#1f6fd8" stroke-width="2.3" stroke-linecap="round"/><path d="M16.1 1.4 V6.4 H11.1" fill="none" stroke="#1f6fd8" stroke-width="2.3" stroke-linecap="round" stroke-linejoin="round"/></svg>
<div style="position:absolute;left:274.8px;top:479.5px;width:1305.3px;height:52.700000000000045px;background:#ebf6fe;border-radius:0;box-sizing:border-box;"></div>
<div style="position:absolute;left:274.8px;top:531.0500000000001px;width:1305.3px;height:1.3px;background:#e0e1e9;border-radius:0;box-sizing:border-box;"></div>
<svg style="position:absolute;left:298.75px;top:496.4px;" width="19" height="19" viewBox="0 0 19 19"><rect x="0" y="0" width="19" height="19" rx="4.5" fill="#3d8bef"/><path d="M5.2 9.6 L8.2 12.4 L13.8 6.6" fill="none" stroke="#fff" stroke-width="2.2" stroke-linecap="round" stroke-linejoin="round"/></svg>
<svg style="position:absolute;left:337px;top:496.5px;" width="19" height="19" viewBox="0 0 19 19"><circle cx="9.5" cy="9.5" r="8.2" fill="none" stroke="#a6a8b3" stroke-width="2.1"/><path d="M9.5 5.3 V13.7 M5.3 9.5 H13.7" stroke="#a6a8b3" stroke-width="2.1" stroke-linecap="round"/></svg>
<span id="t74" style="position:absolute;left:361.50px;top:486.4px;font-size:16.8px;line-height:40px;font-weight:400;color:#0a5fc7;white-space:nowrap;letter-spacing:0.471px;">buy bike cycle</span>
<svg style="position:absolute;left:481.0px;top:499.9px;" width="15" height="14" viewBox="0 0 15 14"><rect x="1" y="1" width="13" height="12" fill="none" stroke="#a6a8b3" stroke-width="1.8"/><path d="M1 6 H14 M9 1 V6" stroke="#a6a8b3" stroke-width="1.6"/></svg>
<div style="position:absolute;left:584px;top:496.5px;width:18.5px;height:19px;background:#fff;border-radius:4px;box-sizing:border-box;"></div>
<span id="t75" style="position:absolute;left:588.30px;top:485.79999999999995px;font-size:14.4px;line-height:40px;font-weight:700;color:#2b7458;white-space:nowrap;">T</span>
<span id="t76" style="position:absolute;right:845.84px;top:486.4px;font-size:16.8px;line-height:40px;font-weight:400;color:#191b23;white-space:nowrap;letter-spacing:-0.140px;">1,000</span>
<svg style="position:absolute;left:779px;top:496.4px;" width="44" height="16" viewBox="0 0 44 16"><path d="M0 16 L0 11 L6 3 L11 12 L17 4 L22 11 L28 6 L34 12 L44 14 L44 16 Z" fill="#dbe8f8"/><path d="M0 11 L6 3 L11 12 L17 4 L22 11 L28 6 L34 12 L44 14" fill="none" stroke="#5d9ae8" stroke-width="1.3"/></svg>
<span id="t77" style="position:absolute;right:703.59px;top:486.4px;font-size:16.8px;line-height:40px;font-weight:400;color:#191b23;white-space:nowrap;letter-spacing:-0.586px;">37</span>
<div style="position:absolute;left:908.6px;top:498.2px;width:14.2px;height:14.2px;background:#ecc04e;border-radius:50%;box-sizing:border-box;"></div>
<span id="t78" style="position:absolute;right:576.47px;top:486.4px;font-size:16.8px;line-height:40px;font-weight:400;color:#191b23;white-space:nowrap;letter-spacing:0.232px;">0.99</span>
<span id="t79" style="position:absolute;right:508.54px;top:486.4px;font-size:16.8px;line-height:40px;font-weight:400;color:#191b23;white-space:nowrap;letter-spacing:-0.343px;">0.90</span>
<svg style="position:absolute;left:1111.6px;top:497.5px;" width="19" height="17" viewBox="0 0 19 17"><path d="M1 15.5 V2.5 H18 V7" fill="none" stroke="#a6a8b3" stroke-width="1.9"/><path d="M1 1.8 H18" stroke="#a6a8b3" stroke-width="2.6"/><path d="M1 15.6 H7" stroke="#a6a8b3" stroke-width="1.9"/><circle cx="12.3" cy="11.2" r="3.2" fill="none" stroke="#a6a8b3" stroke-width="1.8"/><path d="M14.6 13.5 L17 16" stroke="#a6a8b3" stroke-width="1.9" stroke-linecap="round"/></svg>
<div style="position:absolute;left:1140.5px;top:493.5px;width:1.4px;height:24px;background:#d6d8de;border-radius:0;box-sizing:border-box;"></div>
<svg style="position:absolute;left:1151px;top:500.0px;" width="20" height="12" viewBox="0 0 20 12"><path d="M7.5 2 H5.5 A4 4 0 0 0 5.5 10 H7.5 M12.5 2 H14.5 A4 4 0 0 1 14.5 10 H12.5 M6.5 6 H13.5" fill="none" stroke="#a6a8b3" stroke-width="1.9" stroke-linecap="round"/></svg>
<svg style="position:absolute;left:1181.6px;top:498.5px;" width="17" height="15" viewBox="0 0 17 15"><rect x="1" y="1" width="15" height="13" fill="none" stroke="#a6a8b3" stroke-width="1.8"/><path d="M3 12 L7 7.5 L10 10 L14 5.5" fill="none" stroke="#a6a8b3" stroke-width="1.6"/><circle cx="5" cy="4.5" r="1.2" fill="#a6a8b3"/></svg>
<svg style="position:absolute;left:1209.5px;top:497.5px;" width="19" height="17" viewBox="0 0 19 17"><rect x="4" y="1" width="11" height="15" rx="1.5" fill="none" stroke="#a6a8b3" stroke-width="1.8"/><path d="M1.2 4 V13 M17.8 4 V13" stroke="#a6a8b3" stroke-width="1.8" stroke-linecap="round"/><path d="M7.6 5.5 L11.8 8.5 L7.6 11.5 Z" fill="#a6a8b3"/></svg>
<svg style="position:absolute;left:1238.1px;top:496.5px;" width="17" height="18" viewBox="0 0 17 18"><path d="M1 1 H16 V12.5 H6 L1.5 17 Z" fill="none" stroke="#a6a8b3" stroke-width="1.8" stroke-linejoin="round"/><text x="8.5" y="8.8" font-family="Liberation Sans" font-size="7.5" fill="#a6a8b3" text-anchor="middle">?</text></svg>
<span id="t80" style="position:absolute;left:1267.00px;top:486.4px;font-size:16.8px;line-height:40px;font-weight:400;color:#2c2e37;white-space:nowrap;letter-spacing:0.180px;">+6</span>
<div style="position:absolute;left:1267px;top:518.4px;width:21px;height:0;border-top:1.2px dotted #8a8c96"></div>
<span id="t81" style="position:absolute;right:197.17px;top:486.4px;font-size:16.8px;line-height:40px;font-weight:400;color:#191b23;white-space:nowrap;letter-spacing:0.132px;">75.8M</span>
<span id="t82" style="position:absolute;right:67.81px;top:486.4px;font-size:16.8px;line-height:40px;font-weight:400;color:#191b23;white-space:nowrap;letter-spacing:0.391px;">2 weeks</span>
<svg style="position:absolute;left:1537.8px;top:496.8px;" width="18" height="18" viewBox="0 0 18 18"><path d="M13.1 3.9 A6.7 6.7 0 1 0 13.3 13.4" fill="none" stroke="#1f6fd8" stroke-width="2.3" stroke-linecap="round"/><path d="M16.1 1.4 V6.4 H11.1" fill="none" stroke="#1f6fd8" stroke-width="2.3" stroke-linecap="round" stroke-linejoin="round"/></svg>
<div style="position:absolute;left:274.8px;top:532.2px;width:1305.3px;height:76.19999999999993px;background:#fff;border-radius:0;box-sizing:border-box;"></div>
<div style="position:absolute;left:274.8px;top:607.25px;width:1305.3px;height:1.3px;background:#e0e1e9;border-radius:0;box-sizing:border-box;"></div>
<svg style="position:absolute;left:298.75px;top:549.5px;" width="19" height="19" viewBox="0 0 19 19"><rect x="0.5" y="0.5" width="18" height="18" rx="4" fill="#fff" stroke="#cfd2d9" stroke-width="1.1"/></svg>
<svg style="position:absolute;left:337px;top:549.6px;" width="19" height="19" viewBox="0 0 19 19"><circle cx="9.5" cy="9.5" r="8.2" fill="none" stroke="#a6a8b3" stroke-width="2.1"/><path d="M9.5 5.3 V13.7 M5.3 9.5 H13.7" stroke="#a6a8b3" stroke-width="2.1" stroke-linecap="round"/></svg>
<span id="t83" style="position:absolute;left:361.50px;top:539.5px;font-size:16.8px;line-height:40px;font-weight:400;color:#0a5fc7;white-space:nowrap;letter-spacing:0.573px;">best buy electric</span>
<span id="t84" style="position:absolute;left:361.50px;top:563.5px;font-size:16.8px;line-height:40px;font-weight:400;color:#0a5fc7;white-space:nowrap;letter-spacing:0.163px;">bikes</span>
<svg style="position:absolute;left:409.0px;top:577.0px;" width="15" height="14" viewBox="0 0 15 14"><rect x="1" y="1" width="13" height="12" fill="none" stroke="#a6a8b3" stroke-width="1.8"/><path d="M1 6 H14 M9 1 V6" stroke="#a6a8b3" stroke-width="1.6"/></svg>
<div style="position:absolute;left:584px;top:549.6px;width:18.5px;height:19px;background:#b2f0cd;border-radius:4px;box-sizing:border-box;"></div>
<span id="t85" style="position:absolute;left:588.30px;top:538.9px;font-size:14.4px;line-height:40px;font-weight:700;color:#2b7458;white-space:nowrap;">T</span>
<span id="t86" style="position:absolute;right:845.84px;top:539.5px;font-size:16.8px;line-height:40px;font-weight:400;color:#191b23;white-space:nowrap;letter-spacing:-0.140px;">1,000</span>
<svg style="position:absolute;left:779px;top:549.5px;" width="44" height="16" viewBox="0 0 44 16"><path d="M0 16 L0 11 L6 3 L11 12 L17 4 L22 11 L28 6 L34 12 L44 14 L44 16 Z" fill="#dbe8f8"/><path d="M0 11 L6 3 L11 12 L17 4 L22 11 L28 6 L34 12 L44 14" fill="none" stroke="#5d9ae8" stroke-width="1.3"/></svg>
<span id="t87" style="position:absolute;right:703.59px;top:539.5px;font-size:16.8px;line-height:40px;font-weight:400;color:#191b23;white-space:nowrap;letter-spacing:-0.586px;">37</span>
<div style="position:absolute;left:908.6px;top:551.3px;width:14.2px;height:14.2px;background:#ecc04e;border-radius:50%;box-sizing:border-box;"></div>
<span id="t88" style="position:absolute;right:576.47px;top:539.5px;font-size:16.8px;line-height:40px;font-weight:400;color:#191b23;white-space:nowrap;letter-spacing:0.232px;">0.99</span>
<span id="t89" style="position:absolute;right:508.54px;top:539.5px;font-size:16.8px;line-height:40px;font-weight:400;color:#191b23;white-space:nowrap;letter-spacing:-0.343px;">1.00</span>
<svg style="position:absolute;left:1111.6px;top:550.6px;" width="19" height="17" viewBox="0 0 19 17"><path d="M1 15.5 V2.5 H18 V7" fill="none" stroke="#a6a8b3" stroke-width="1.9"/><path d="M1 1.8 H18" stroke="#a6a8b3" stroke-width="2.6"/><path d="M1 15.6 H7" stroke="#a6a8b3" stroke-width="1.9"/><circle cx="12.3" cy="11.2" r="3.2" fill="none" stroke="#a6a8b3" stroke-width="1.8"/><path d="M14.6 13.5 L17 16" stroke="#a6a8b3" stroke-width="1.9" stroke-linecap="round"/></svg>
<div style="position:absolute;left:1140.5px;top:546.6px;width:1.4px;height:24px;background:#d6d8de;border-radius:0;box-sizing:border-box;"></div>
<svg style="position:absolute;left:1151px;top:553.1px;" width="20" height="12" viewBox="0 0 20 12"><path d="M7.5 2 H5.5 A4 4 0 0 0 5.5 10 H7.5 M12.5 2 H14.5 A4 4 0 0 1 14.5 10 H12.5 M6.5 6 H13.5" fill="none" stroke="#a6a8b3" stroke-width="1.9" stroke-linecap="round"/></svg>
<svg style="position:absolute;left:1181.6px;top:551.6px;" width="17" height="15" viewBox="0 0 17 15"><rect x="1" y="1" width="15" height="13" fill="none" stroke="#a6a8b3" stroke-width="1.8"/><path d="M3 12 L7 7.5 L10 10 L14 5.5" fill="none" stroke="#a6a8b3" stroke-width="1.6"/><circle cx="5" cy="4.5" r="1.2" fill="#a6a8b3"/></svg>
<svg style="position:absolute;left:1210px;top:550.6px;" width="19" height="18" viewBox="0 0 19 18"><rect x="1" y="1" width="13" height="12" fill="none" stroke="#a6a8b3" stroke-width="1.8"/><path d="M17 5 V16.5 H5" fill="none" stroke="#a6a8b3" stroke-width="1.8"/><path d="M2.5 11 L6 7 L8.5 9 L12 5" fill="none" stroke="#a6a8b3" stroke-width="1.5"/><circle cx="4.5" cy="4" r="1.1" fill="#a6a8b3"/></svg>
<svg style="position:absolute;left:1237.1px;top:550.1px;" width="18" height="18" viewBox="0 0 18 18"><circle cx="9" cy="9" r="7.6" fill="none" stroke="#a6a8b3" stroke-width="1.8"/><path d="M7.2 5.6 L12.2 9 L7.2 12.4 Z" fill="#a6a8b3"/></svg>
<span id="t90" style="position:absolute;left:1267.00px;top:539.5px;font-size:16.8px;line-height:40px;font-weight:400;color:#2c2e37;white-space:nowrap;letter-spacing:0.180px;">+4</span>
<div style="position:absolute;left:1267px;top:571.5px;width:21px;height:0;border-top:1.2px dotted #8a8c96"></div>
<span id="t91" style="position:absolute;right:196.67px;top:539.5px;font-size:16.8px;line-height:40px;font-weight:400;color:#191b23;white-space:nowrap;letter-spacing:0.629px;">253M</span>
<span id="t92" style="position:absolute;right:67.83px;top:539.5px;font-size:16.8px;line-height:40px;font-weight:400;color:#191b23;white-space:nowrap;letter-spacing:0.371px;">Last week</span>
<svg style="position:absolute;left:1537.8px;top:549.9px;" width="18" height="18" viewBox="0 0 18 18"><path d="M13.1 3.9 A6.7 6.7 0 1 0 13.3 13.4" fill="none" stroke="#1f6fd8" stroke-width="2.3" stroke-linecap="round"/><path d="M16.1 1.4 V6.4 H11.1" fill="none" stroke="#1f6fd8" stroke-width="2.3" stroke-linecap="round" stroke-linejoin="round"/></svg>
<div style="position:absolute;left:274.8px;top:608.4px;width:1305.3px;height:52.89999999999998px;background:#fff;border-radius:0;box-sizing:border-box;"></div>
<div style="position:absolute;left:274.8px;top:660.15px;width:1305.3px;height:1.3px;background:#e0e1e9;border-radius:0;box-sizing:border-box;"></div>
<svg style="position:absolute;left:298.75px;top:626.0999999999999px;" width="19" height="19" viewBox="0 0 19 19"><rect x="0.5" y="0.5" width="18" height="18" rx="4" fill="#fff" stroke="#cfd2d9" stroke-width="1.1"/></svg>
<svg style="position:absolute;left:337px;top:626.1999999999999px;" width="19" height="19" viewBox="0 0 19 19"><circle cx="9.5" cy="9.5" r="8.2" fill="none" stroke="#a6a8b3" stroke-width="2.1"/><path d="M9.5 5.3 V13.7 M5.3 9.5 H13.7" stroke="#a6a8b3" stroke-width="2.1" stroke-linecap="round"/></svg>
<span id="t93" style="position:absolute;left:361.50px;top:616.0999999999999px;font-size:16.8px;line-height:40px;font-weight:400;color:#0a5fc7;white-space:nowrap;letter-spacing:0.373px;">buy bike</span>
<svg style="position:absolute;left:434.5px;top:629.5999999999999px;" width="15" height="14" viewBox="0 0 15 14"><rect x="1" y="1" width="13" height="12" fill="none" stroke="#a6a8b3" stroke-width="1.8"/><path d="M1 6 H14 M9 1 V6" stroke="#a6a8b3" stroke-width="1.6"/></svg>
<div style="position:absolute;left:584px;top:626.1999999999999px;width:18.5px;height:19px;background:#b2f0cd;border-radius:4px;box-sizing:border-box;"></div>
<span id="t94" style="position:absolute;left:588.30px;top:615.4999999999999px;font-size:14.4px;line-height:40px;font-weight:700;color:#2b7458;white-space:nowrap;">T</span>
<span id="t95" style="position:absolute;right:845.84px;top:616.0999999999999px;font-size:16.8px;line-height:40px;font-weight:400;color:#191b23;white-space:nowrap;letter-spacing:-0.140px;">1,000</span>
<svg style="position:absolute;left:779px;top:626.0999999999999px;" width="44" height="16" viewBox="0 0 44 16"><path d="M0 16 L0 11 L6 3 L11 12 L17 4 L22 11 L28 6 L34 12 L44 14 L44 16 Z" fill="#dbe8f8"/><path d="M0 11 L6 3 L11 12 L17 4 L22 11 L28 6 L34 12 L44 14" fill="none" stroke="#5d9ae8" stroke-width="1.3"/></svg>
<span id="t96" style="position:absolute;right:703.59px;top:616.0999999999999px;font-size:16.8px;line-height:40px;font-weight:400;color:#191b23;white-space:nowrap;letter-spacing:-0.586px;">37</span>
<div style="position:absolute;left:908.6px;top:627.8999999999999px;width:14.2px;height:14.2px;background:#ecc04e;border-radius:50%;box-sizing:border-box;"></div>
<span id="t97" style="position:absolute;right:576.47px;top:616.0999999999999px;font-size:16.8px;line-height:40px;font-weight:400;color:#191b23;white-space:nowrap;letter-spacing:0.232px;">0.99</span>
<span id="t98" style="position:absolute;right:508.54px;top:616.0999999999999px;font-size:16.8px;line-height:40px;font-weight:400;color:#191b23;white-space:nowrap;letter-spacing:-0.343px;">1.00</span>
<svg style="position:absolute;left:1111.6px;top:627.1999999999999px;" width="19" height="17" viewBox="0 0 19 17"><path d="M1 15.5 V2.5 H18 V7" fill="none" stroke="#a6a8b3" stroke-width="1.9"/><path d="M1 1.8 H18" stroke="#a6a8b3" stroke-width="2.6"/><path d="M1 15.6 H7" stroke="#a6a8b3" stroke-width="1.9"/><circle cx="12.3" cy="11.2" r="3.2" fill="none" stroke="#a6a8b3" stroke-width="1.8"/><path d="M14.6 13.5 L17 16" stroke="#a6a8b3" stroke-width="1.9" stroke-linecap="round"/></svg>
<div style="position:absolute;left:1140.5px;top:623.1999999999999px;width:1.4px;height:24px;background:#d6d8de;border-radius:0;box-sizing:border-box;"></div>
<svg style="position:absolute;left:1151px;top:629.6999999999999px;" width="20" height="12" viewBox="0 0 20 12"><path d="M7.5 2 H5.5 A4 4 0 0 0 5.5 10 H7.5 M12.5 2 H14.5 A4 4 0 0 1 14.5 10 H12.5 M6.5 6 H13.5" fill="none" stroke="#a6a8b3" stroke-width="1.9" stroke-linecap="round"/></svg>
<svg style="position:absolute;left:1181.6px;top:628.1999999999999px;" width="17" height="15" viewBox="0 0 17 15"><rect x="1" y="1" width="15" height="13" fill="none" stroke="#a6a8b3" stroke-width="1.8"/><path d="M3 12 L7 7.5 L10 10 L14 5.5" fill="none" stroke="#a6a8b3" stroke-width="1.6"/><circle cx="5" cy="4.5" r="1.2" fill="#a6a8b3"/></svg>
<svg style="position:absolute;left:1210px;top:627.1999999999999px;" width="19" height="18" viewBox="0 0 19 18"><rect x="1" y="1" width="13" height="12" fill="none" stroke="#a6a8b3" stroke-width="1.8"/><path d="M17 5 V16.5 H5" fill="none" stroke="#a6a8b3" stroke-width="1.8"/><path d="M2.5 11 L6 7 L8.5 9 L12 5" fill="none" stroke="#a6a8b3" stroke-width="1.5"/><circle cx="4.5" cy="4" r="1.1" fill="#a6a8b3"/></svg>
<svg style="position:absolute;left:1237.1px;top:626.6999999999999px;" width="18" height="18" viewBox="0 0 18 18"><circle cx="9" cy="9" r="7.6" fill="none" stroke="#a6a8b3" stroke-width="1.8"/><path d="M7.2 5.6 L12.2 9 L7.2 12.4 Z" fill="#a6a8b3"/></svg>
<span id="t99" style="position:absolute;left:1267.00px;top:616.0999999999999px;font-size:16.8px;line-height:40px;font-weight:400;color:#2c2e37;white-space:nowrap;letter-spacing:0.180px;">+6</span>
<div style="position:absolute;left:1267px;top:648.0999999999999px;width:21px;height:0;border-top:1.2px dotted #8a8c96"></div>
<span id="t100" style="position:absolute;right:198.06px;top:616.0999999999999px;font-size:16.8px;line-height:40px;font-weight:400;color:#191b23;white-space:nowrap;letter-spacing:-0.758px;">1.8B</span>
<span id="t101" style="position:absolute;right:67.83px;top:616.0999999999999px;font-size:16.8px;line-height:40px;font-weight:400;color:#191b23;white-space:nowrap;letter-spacing:0.371px;">Last week</span>
<svg style="position:absolute;left:1537.8px;top:626.4999999999999px;" width="18" height="18" viewBox="0 0 18 18"><path d="M13.1 3.9 A6.7 6.7 0 1 0 13.3 13.4" fill="none" stroke="#1f6fd8" stroke-width="2.3" stroke-linecap="round"/><path d="M16.1 1.4 V6.4 H11.1" fill="none" stroke="#1f6fd8" stroke-width="2.3" stroke-linecap="round" stroke-linejoin="round"/></svg>
<div style="position:absolute;left:274.8px;top:661.3px;width:1305.3px;height:52.80000000000007px;background:#fff;border-radius:0;box-sizing:border-box;"></div>
<div style="position:absolute;left:274.8px;top:712.95px;width:1305.3px;height:1.3px;background:#e0e1e9;border-radius:0;box-sizing:border-box;"></div>
<svg style="position:absolute;left:298.75px;top:678.9999999999999px;" width="19" height="19" viewBox="0 0 19 19"><rect x="0.5" y="0.5" width="18" height="18" rx="4" fill="#fff" stroke="#cfd2d9" stroke-width="1.1"/></svg>
<svg style="position:absolute;left:337px;top:679.0999999999999px;" width="19" height="19" viewBox="0 0 19 19"><circle cx="9.5" cy="9.5" r="8.2" fill="none" stroke="#a6a8b3" stroke-width="2.1"/><path d="M9.5 5.3 V13.7 M5.3 9.5 H13.7" stroke="#a6a8b3" stroke-width="2.1" stroke-linecap="round"/></svg>
<span id="t102" style="position:absolute;left:361.50px;top:668.9999999999999px;font-size:16.8px;line-height:40px;font-weight:400;color:#0a5fc7;white-space:nowrap;letter-spacing:0.510px;">buy electric bike</span>
<svg style="position:absolute;left:498.0px;top:682.4999999999999px;" width="15" height="14" viewBox="0 0 15 14"><rect x="1" y="1" width="13" height="12" fill="none" stroke="#a6a8b3" stroke-width="1.8"/><path d="M1 6 H14 M9 1 V6" stroke="#a6a8b3" stroke-width="1.6"/></svg>
<div style="position:absolute;left:584px;top:679.0999999999999px;width:18.5px;height:19px;background:#b2f0cd;border-radius:4px;box-sizing:border-box;"></div>
<span id="t103" style="position:absolute;left:588.30px;top:668.3999999999999px;font-size:14.4px;line-height:40px;font-weight:700;color:#2b7458;white-space:nowrap;">T</span>
<span id="t104" style="position:absolute;right:845.84px;top:668.9999999999999px;font-size:16.8px;line-height:40px;font-weight:400;color:#191b23;white-space:nowrap;letter-spacing:-0.140px;">1,000</span>
<svg style="position:absolute;left:779px;top:678.9999999999999px;" width="44" height="16" viewBox="0 0 44 16"><path d="M0 16 L0 11 L6 3 L11 12 L17 4 L22 11 L28 6 L34 12 L44 14 L44 16 Z" fill="#dbe8f8"/><path d="M0 11 L6 3 L11 12 L17 4 L22 11 L28 6 L34 12 L44 14" fill="none" stroke="#5d9ae8" stroke-width="1.3"/></svg>
<span id="t105" style="position:absolute;right:703.59px;top:668.9999999999999px;font-size:16.8px;line-height:40px;font-weight:400;color:#191b23;white-space:nowrap;letter-spacing:-0.586px;">37</span>
<div style="position:absolute;left:908.6px;top:680.7999999999998px;width:14.2px;height:14.2px;background:#ecc04e;border-radius:50%;box-sizing:border-box;"></div>
<span id="t106" style="position:absolute;right:576.47px;top:668.9999999999999px;font-size:16.8px;line-height:40px;font-weight:400;color:#191b23;white-space:nowrap;letter-spacing:0.232px;">0.99</span>
<span id="t107" style="position:absolute;right:508.54px;top:668.9999999999999px;font-size:16.8px;line-height:40px;font-weight:400;color:#191b23;white-space:nowrap;letter-spacing:-0.343px;">1.00</span>
<svg style="position:absolute;left:1111.6px;top:680.0999999999999px;" width="19" height="17" viewBox="0 0 19 17"><path d="M1 15.5 V2.5 H18 V7" fill="none" stroke="#a6a8b3" stroke-width="1.9"/><path d="M1 1.8 H18" stroke="#a6a8b3" stroke-width="2.6"/><path d="M1 15.6 H7" stroke="#a6a8b3" stroke-width="1.9"/><circle cx="12.3" cy="11.2" r="3.2" fill="none" stroke="#a6a8b3" stroke-width="1.8"/><path d="M14.6 13.5 L17 16" stroke="#a6a8b3" stroke-width="1.9" stroke-linecap="round"/></svg>
<div style="position:absolute;left:1140.5px;top:676.0999999999999px;width:1.4px;height:24px;background:#d6d8de;border-radius:0;box-sizing:border-box;"></div>
<svg style="position:absolute;left:1151px;top:682.5999999999999px;" width="20" height="12" viewBox="0 0 20 12"><path d="M7.5 2 H5.5 A4 4 0 0 0 5.5 10 H7.5 M12.5 2 H14.5 A4 4 0 0 1 14.5 10 H12.5 M6.5 6 H13.5" fill="none" stroke="#a6a8b3" stroke-width="1.9" stroke-linecap="round"/></svg>
<svg style="position:absolute;left:1181.6px;top:681.0999999999999px;" width="17" height="15" viewBox="0 0 17 15"><rect x="1" y="1" width="15" height="13" fill="none" stroke="#a6a8b3" stroke-width="1.8"/><path d="M3 12 L7 7.5 L10 10 L14 5.5" fill="none" stroke="#a6a8b3" stroke-width="1.6"/><circle cx="5" cy="4.5" r="1.2" fill="#a6a8b3"/></svg>
<svg style="position:absolute;left:1209.5px;top:679.5999999999999px;" width="18" height="18" viewBox="0 0 18 18"><circle cx="9" cy="9" r="7.6" fill="none" stroke="#a6a8b3" stroke-width="1.8"/><path d="M7.2 5.6 L12.2 9 L7.2 12.4 Z" fill="#a6a8b3"/></svg>
<svg style="position:absolute;left:1238.1px;top:679.0999999999999px;" width="17" height="18" viewBox="0 0 17 18"><path d="M1 1 H16 V12.5 H6 L1.5 17 Z" fill="none" stroke="#a6a8b3" stroke-width="1.8" stroke-linejoin="round"/><text x="8.5" y="8.8" font-family="Liberation Sans" font-size="7.5" fill="#a6a8b3" text-anchor="middle">?</text></svg>
<span id="t108" style="position:absolute;left:1267.00px;top:668.9999999999999px;font-size:16.8px;line-height:40px;font-weight:400;color:#2c2e37;white-space:nowrap;letter-spacing:0.180px;">+5</span>
<div style="position:absolute;left:1267px;top:700.9999999999999px;width:21px;height:0;border-top:1.2px dotted #8a8c96"></div>
<span id="t109" style="position:absolute;right:197.42px;top:668.9999999999999px;font-size:16.8px;line-height:40px;font-weight:400;color:#191b23;white-space:nowrap;letter-spacing:-0.121px;">317M</span>
<span id="t110" style="position:absolute;right:67.83px;top:668.9999999999999px;font-size:16.8px;line-height:40px;font-weight:400;color:#191b23;white-space:nowrap;letter-spacing:0.371px;">Last week</span>
<svg style="position:absolute;left:1537.8px;top:679.3999999999999px;" width="18" height="18" viewBox="0 0 18 18"><path d="M13.1 3.9 A6.7 6.7 0 1 0 13.3 13.4" fill="none" stroke="#1f6fd8" stroke-width="2.3" stroke-linecap="round"/><path d="M16.1 1.4 V6.4 H11.1" fill="none" stroke="#1f6fd8" stroke-width="2.3" stroke-linecap="round" stroke-linejoin="round"/></svg>
<div style="position:absolute;left:274.8px;top:714.1px;width:1305.3px;height:52.799999999999955px;background:#fff;border-radius:0;box-sizing:border-box;"></div>
<div style="position:absolute;left:274.8px;top:765.75px;width:1305.3px;height:1.3px;background:#e0e1e9;border-radius:0;box-sizing:border-box;"></div>
<svg style="position:absolute;left:298.75px;top:731.8px;" width="19" height="19" viewBox="0 0 19 19"><rect x="0.5" y="0.5" width="18" height="18" rx="4" fill="#fff" stroke="#cfd2d9" stroke-width="1.1"/></svg>
<svg style="position:absolute;left:337px;top:731.9px;" width="19" height="19" viewBox="0 0 19 19"><circle cx="9.5" cy="9.5" r="8.2" fill="none" stroke="#a6a8b3" stroke-width="2.1"/><path d="M9.5 5.3 V13.7 M5.3 9.5 H13.7" stroke="#a6a8b3" stroke-width="2.1" stroke-linecap="round"/></svg>
<span id="t111" style="position:absolute;left:361.50px;top:721.8px;font-size:16.8px;line-height:40px;font-weight:400;color:#0a5fc7;white-space:nowrap;letter-spacing:0.385px;">buy exercise bike</span>
<svg style="position:absolute;left:505.2px;top:735.3px;" width="15" height="14" viewBox="0 0 15 14"><rect x="1" y="1" width="13" height="12" fill="none" stroke="#a6a8b3" stroke-width="1.8"/><path d="M1 6 H14 M9 1 V6" stroke="#a6a8b3" stroke-width="1.6"/></svg>
<div style="position:absolute;left:584px;top:731.9px;width:18.5px;height:19px;background:#b2f0cd;border-radius:4px;box-sizing:border-box;"></div>
<span id="t112" style="position:absolute;left:588.30px;top:721.1999999999999px;font-size:14.4px;line-height:40px;font-weight:700;color:#2b7458;white-space:nowrap;">T</span>
<span id="t113" style="position:absolute;right:845.84px;top:721.8px;font-size:16.8px;line-height:40px;font-weight:400;color:#191b23;white-space:nowrap;letter-spacing:-0.140px;">1,000</span>
<svg style="position:absolute;left:779px;top:731.8px;" width="44" height="16" viewBox="0 0 44 16"><path d="M0 16 L0 11 L6 3 L11 12 L17 4 L22 11 L28 6 L34 12 L44 14 L44 16 Z" fill="#dbe8f8"/><path d="M0 11 L6 3 L11 12 L17 4 L22 11 L28 6 L34 12 L44 14" fill="none" stroke="#5d9ae8" stroke-width="1.3"/></svg>
<span id="t114" style="position:absolute;right:703.59px;top:721.8px;font-size:16.8px;line-height:40px;font-weight:400;color:#191b23;white-space:nowrap;letter-spacing:-0.586px;">37</span>
<div style="position:absolute;left:908.6px;top:733.5999999999999px;width:14.2px;height:14.2px;background:#ecc04e;border-radius:50%;box-sizing:border-box;"></div>
<span id="t115" style="position:absolute;right:576.47px;top:721.8px;font-size:16.8px;line-height:40px;font-weight:400;color:#191b23;white-space:nowrap;letter-spacing:0.232px;">0.99</span>
<span id="t116" style="position:absolute;right:508.54px;top:721.8px;font-size:16.8px;line-height:40px;font-weight:400;color:#191b23;white-space:nowrap;letter-spacing:-0.343px;">1.00</span>
<svg style="position:absolute;left:1111.6px;top:732.9px;" width="19" height="17" viewBox="0 0 19 17"><path d="M1 15.5 V2.5 H18 V7" fill="none" stroke="#a6a8b3" stroke-width="1.9"/><path d="M1 1.8 H18" stroke="#a6a8b3" stroke-width="2.6"/><path d="M1 15.6 H7" stroke="#a6a8b3" stroke-width="1.9"/><circle cx="12.3" cy="11.2" r="3.2" fill="none" stroke="#a6a8b3" stroke-width="1.8"/><path d="M14.6 13.5 L17 16" stroke="#a6a8b3" stroke-width="1.9" stroke-linecap="round"/></svg>
<div style="position:absolute;left:1140.5px;top:728.9px;width:1.4px;height:24px;background:#d6d8de;border-radius:0;box-sizing:border-box;"></div>
<svg style="position:absolute;left:1151px;top:735.4px;" width="20" height="12" viewBox="0 0 20 12"><path d="M7.5 2 H5.5 A4 4 0 0 0 5.5 10 H7.5 M12.5 2 H14.5 A4 4 0 0 1 14.5 10 H12.5 M6.5 6 H13.5" fill="none" stroke="#a6a8b3" stroke-width="1.9" stroke-linecap="round"/></svg>
<svg style="position:absolute;left:1181.6px;top:733.9px;" width="17" height="15" viewBox="0 0 17 15"><rect x="1" y="1" width="15" height="13" fill="none" stroke="#a6a8b3" stroke-width="1.8"/><path d="M3 12 L7 7.5 L10 10 L14 5.5" fill="none" stroke="#a6a8b3" stroke-width="1.6"/><circle cx="5" cy="4.5" r="1.2" fill="#a6a8b3"/></svg>
<svg style="position:absolute;left:1210px;top:732.9px;" width="19" height="18" viewBox="0 0 19 18"><rect x="1" y="1" width="13" height="12" fill="none" stroke="#a6a8b3" stroke-width="1.8"/><path d="M17 5 V16.5 H5" fill="none" stroke="#a6a8b3" stroke-width="1.8"/><path d="M2.5 11 L6 7 L8.5 9 L12 5" fill="none" stroke="#a6a8b3" stroke-width="1.5"/><circle cx="4.5" cy="4" r="1.1" fill="#a6a8b3"/></svg>
<svg style="position:absolute;left:1237.1px;top:732.4px;" width="18" height="18" viewBox="0 0 18 18"><circle cx="9" cy="9" r="7.6" fill="none" stroke="#a6a8b3" stroke-width="1.8" stroke-dasharray="3.2 1.6"/><path d="M7.2 5.6 L12.2 9 L7.2 12.4 Z" fill="#a6a8b3"/></svg>
<span id="t117" style="position:absolute;left:1267.00px;top:721.8px;font-size:16.8px;line-height:40px;font-weight:400;color:#2c2e37;white-space:nowrap;letter-spacing:0.180px;">+6</span>
<div style="position:absolute;left:1267px;top:753.8px;width:21px;height:0;border-top:1.2px dotted #8a8c96"></div>
<span id="t118" style="position:absolute;right:197.42px;top:721.8px;font-size:16.8px;line-height:40px;font-weight:400;color:#191b23;white-space:nowrap;letter-spacing:-0.121px;">170M</span>
<span id="t119" style="position:absolute;right:67.83px;top:721.8px;font-size:16.8px;line-height:40px;font-weight:400;color:#191b23;white-space:nowrap;letter-spacing:0.371px;">Last week</span>
<svg style="position:absolute;left:1537.8px;top:732.1999999999999px;" width="18" height="18" viewBox="0 0 18 18"><path d="M13.1 3.9 A6.7 6.7 0 1 0 13.3 13.4" fill="none" stroke="#1f6fd8" stroke-width="2.3" stroke-linecap="round"/><path d="M16.1 1.4 V6.4 H11.1" fill="none" stroke="#1f6fd8" stroke-width="2.3" stroke-linecap="round" stroke-linejoin="round"/></svg>
<div style="position:absolute;left:274.8px;top:766.9px;width:1305.3px;height:52.700000000000045px;background:#fff;border-radius:0;box-sizing:border-box;"></div>
<div style="position:absolute;left:274.8px;top:818.45px;width:1305.3px;height:1.3px;background:#e0e1e9;border-radius:0;box-sizing:border-box;"></div>
<svg style="position:absolute;left:298.75px;top:784.5999999999999px;" width="19" height="19" viewBox="0 0 19 19"><rect x="0.5" y="0.5" width="18" height="18" rx="4" fill="#fff" stroke="#cfd2d9" stroke-width="1.1"/></svg>
<svg style="position:absolute;left:337px;top:784.6999999999999px;" width="19" height="19" viewBox="0 0 19 19"><circle cx="9.5" cy="9.5" r="8.2" fill="none" stroke="#a6a8b3" stroke-width="2.1"/><path d="M9.5 5.3 V13.7 M5.3 9.5 H13.7" stroke="#a6a8b3" stroke-width="2.1" stroke-linecap="round"/></svg>
<span id="t120" style="position:absolute;left:361.50px;top:774.5999999999999px;font-size:16.8px;line-height:40px;font-weight:400;color:#0a5fc7;white-space:nowrap;letter-spacing:0.451px;">best buy e bikes</span>
<svg style="position:absolute;left:497.5px;top:788.0999999999999px;" width="15" height="14" viewBox="0 0 15 14"><rect x="1" y="1" width="13" height="12" fill="none" stroke="#a6a8b3" stroke-width="1.8"/><path d="M1 6 H14 M9 1 V6" stroke="#a6a8b3" stroke-width="1.6"/></svg>
<div style="position:absolute;left:584px;top:784.6999999999999px;width:18.5px;height:19px;background:#b2f0cd;border-radius:4px;box-sizing:border-box;"></div>
<span id="t121" style="position:absolute;left:588.30px;top:773.9999999999999px;font-size:14.4px;line-height:40px;font-weight:700;color:#2b7458;white-space:nowrap;">T</span>
<span id="t122" style="position:absolute;right:845.84px;top:774.5999999999999px;font-size:16.8px;line-height:40px;font-weight:400;color:#191b23;white-space:nowrap;letter-spacing:-0.140px;">1,000</span>
<svg style="position:absolute;left:779px;top:784.5999999999999px;" width="44" height="16" viewBox="0 0 44 16"><path d="M0 16 L0 11 L6 3 L11 12 L17 4 L22 11 L28 6 L34 12 L44 14 L44 16 Z" fill="#dbe8f8"/><path d="M0 11 L6 3 L11 12 L17 4 L22 11 L28 6 L34 12 L44 14" fill="none" stroke="#5d9ae8" stroke-width="1.3"/></svg>
<span id="t123" style="position:absolute;right:703.59px;top:774.5999999999999px;font-size:16.8px;line-height:40px;font-weight:400;color:#191b23;white-space:nowrap;letter-spacing:-0.586px;">37</span>
<div style="position:absolute;left:908.6px;top:786.3999999999999px;width:14.2px;height:14.2px;background:#ecc04e;border-radius:50%;box-sizing:border-box;"></div>
<span id="t124" style="position:absolute;right:576.47px;top:774.5999999999999px;font-size:16.8px;line-height:40px;font-weight:400;color:#191b23;white-space:nowrap;letter-spacing:0.232px;">0.99</span>
<span id="t125" style="position:absolute;right:508.54px;top:774.5999999999999px;font-size:16.8px;line-height:40px;font-weight:400;color:#191b23;white-space:nowrap;letter-spacing:-0.343px;">1.00</span>
<svg style="position:absolute;left:1111.6px;top:785.6999999999999px;" width="19" height="17" viewBox="0 0 19 17"><path d="M1 15.5 V2.5 H18 V7" fill="none" stroke="#a6a8b3" stroke-width="1.9"/><path d="M1 1.8 H18" stroke="#a6a8b3" stroke-width="2.6"/><path d="M1 15.6 H7" stroke="#a6a8b3" stroke-width="1.9"/><circle cx="12.3" cy="11.2" r="3.2" fill="none" stroke="#a6a8b3" stroke-width="1.8"/><path d="M14.6 13.5 L17 16" stroke="#a6a8b3" stroke-width="1.9" stroke-linecap="round"/></svg>
<div style="position:absolute;left:1140.5px;top:781.6999999999999px;width:1.4px;height:24px;background:#d6d8de;border-radius:0;box-sizing:border-box;"></div>
<svg style="position:absolute;left:1151px;top:788.1999999999999px;" width="20" height="12" viewBox="0 0 20 12"><path d="M7.5 2 H5.5 A4 4 0 0 0 5.5 10 H7.5 M12.5 2 H14.5 A4 4 0 0 1 14.5 10 H12.5 M6.5 6 H13.5" fill="none" stroke="#a6a8b3" stroke-width="1.9" stroke-linecap="round"/></svg>
<svg style="position:absolute;left:1181.6px;top:786.6999999999999px;" width="17" height="15" viewBox="0 0 17 15"><rect x="1" y="1" width="15" height="13" fill="none" stroke="#a6a8b3" stroke-width="1.8"/><path d="M3 12 L7 7.5 L10 10 L14 5.5" fill="none" stroke="#a6a8b3" stroke-width="1.6"/><circle cx="5" cy="4.5" r="1.2" fill="#a6a8b3"/></svg>
<svg style="position:absolute;left:1209.5px;top:785.1999999999999px;" width="18" height="18" viewBox="0 0 18 18"><circle cx="9" cy="9" r="7.6" fill="none" stroke="#a6a8b3" stroke-width="1.8"/><path d="M7.2 5.6 L12.2 9 L7.2 12.4 Z" fill="#a6a8b3"/></svg>
<svg style="position:absolute;left:1238.1px;top:784.6999999999999px;" width="17" height="18" viewBox="0 0 17 18"><path d="M1 1 H16 V12.5 H6 L1.5 17 Z" fill="none" stroke="#a6a8b3" stroke-width="1.8" stroke-linejoin="round"/><text x="8.5" y="8.8" font-family="Liberation Sans" font-size="7.5" fill="#a6a8b3" text-anchor="middle">?</text></svg>
<span id="t126" style="position:absolute;left:1267.00px;top:774.5999999999999px;font-size:16.8px;line-height:40px;font-weight:400;color:#2c2e37;white-space:nowrap;letter-spacing:0.180px;">+3</span>
<div style="position:absolute;left:1267px;top:806.5999999999999px;width:21px;height:0;border-top:1.2px dotted #8a8c96"></div>
<span id="t127" style="position:absolute;right:197.42px;top:774.5999999999999px;font-size:16.8px;line-height:40px;font-weight:400;color:#191b23;white-space:nowrap;letter-spacing:-0.121px;">221M</span>
<span id="t128" style="position:absolute;right:67.83px;top:774.5999999999999px;font-size:16.8px;line-height:40px;font-weight:400;color:#191b23;white-space:nowrap;letter-spacing:0.371px;">Last week</span>
<svg style="position:absolute;left:1537.8px;top:784.9999999999999px;" width="18" height="18" viewBox="0 0 18 18"><path d="M13.1 3.9 A6.7 6.7 0 1 0 13.3 13.4" fill="none" stroke="#1f6fd8" stroke-width="2.3" stroke-linecap="round"/><path d="M16.1 1.4 V6.4 H11.1" fill="none" stroke="#1f6fd8" stroke-width="2.3" stroke-linecap="round" stroke-linejoin="round"/></svg>
<div style="position:absolute;left:274.8px;top:819.6px;width:1305.3px;height:51.89999999999998px;background:#fff;border-radius:0;box-sizing:border-box;"></div>
<div style="position:absolute;left:274.8px;top:870.35px;width:1305.3px;height:1.3px;background:#e0e1e9;border-radius:0;box-sizing:border-box;"></div>
<svg style="position:absolute;left:298.75px;top:837.3px;" width="19" height="19" viewBox="0 0 19 19"><rect x="0.5" y="0.5" width="18" height="18" rx="4" fill="#fff" stroke="#cfd2d9" stroke-width="1.1"/></svg>
<svg style="position:absolute;left:337px;top:837.4px;" width="19" height="19" viewBox="0 0 19 19"><circle cx="9.5" cy="9.5" r="8.2" fill="none" stroke="#a6a8b3" stroke-width="2.1"/><path d="M9.5 5.3 V13.7 M5.3 9.5 H13.7" stroke="#a6a8b3" stroke-width="2.1" stroke-linecap="round"/></svg>
<span id="t129" style="position:absolute;left:361.50px;top:827.3px;font-size:16.8px;line-height:40px;font-weight:400;color:#0a5fc7;white-space:nowrap;letter-spacing:0.085px;">best buy bike</span>
<svg style="position:absolute;left:469.0px;top:840.8px;" width="15" height="14" viewBox="0 0 15 14"><rect x="1" y="1" width="13" height="12" fill="none" stroke="#a6a8b3" stroke-width="1.8"/><path d="M1 6 H14 M9 1 V6" stroke="#a6a8b3" stroke-width="1.6"/></svg>
<div style="position:absolute;left:584px;top:837.4px;width:18.5px;height:19px;background:#b2f0cd;border-radius:4px;box-sizing:border-box;"></div>
<span id="t130" style="position:absolute;left:588.30px;top:826.6999999999999px;font-size:14.4px;line-height:40px;font-weight:700;color:#2b7458;white-space:nowrap;">T</span>
<span id="t131" style="position:absolute;right:845.84px;top:827.3px;font-size:16.8px;line-height:40px;font-weight:400;color:#191b23;white-space:nowrap;letter-spacing:-0.140px;">1,000</span>
<svg style="position:absolute;left:779px;top:837.3px;" width="44" height="16" viewBox="0 0 44 16"><path d="M0 16 L0 11 L6 3 L11 12 L17 4 L22 11 L28 6 L34 12 L44 14 L44 16 Z" fill="#dbe8f8"/><path d="M0 11 L6 3 L11 12 L17 4 L22 11 L28 6 L34 12 L44 14" fill="none" stroke="#5d9ae8" stroke-width="1.3"/></svg>
<span id="t132" style="position:absolute;right:703.59px;top:827.3px;font-size:16.8px;line-height:40px;font-weight:400;color:#191b23;white-space:nowrap;letter-spacing:-0.586px;">37</span>
<div style="position:absolute;left:908.6px;top:839.0999999999999px;width:14.2px;height:14.2px;background:#ecc04e;border-radius:50%;box-sizing:border-box;"></div>
<span id="t133" style="position:absolute;right:576.47px;top:827.3px;font-size:16.8px;line-height:40px;font-weight:400;color:#191b23;white-space:nowrap;letter-spacing:0.232px;">0.99</span>
<span id="t134" style="position:absolute;right:508.54px;top:827.3px;font-size:16.8px;line-height:40px;font-weight:400;color:#191b23;white-space:nowrap;letter-spacing:-0.343px;">1.00</span>
<svg style="position:absolute;left:1111.6px;top:838.4px;" width="19" height="17" viewBox="0 0 19 17"><path d="M1 15.5 V2.5 H18 V7" fill="none" stroke="#a6a8b3" stroke-width="1.9"/><path d="M1 1.8 H18" stroke="#a6a8b3" stroke-width="2.6"/><path d="M1 15.6 H7" stroke="#a6a8b3" stroke-width="1.9"/><circle cx="12.3" cy="11.2" r="3.2" fill="none" stroke="#a6a8b3" stroke-width="1.8"/><path d="M14.6 13.5 L17 16" stroke="#a6a8b3" stroke-width="1.9" stroke-linecap="round"/></svg>
<div style="position:absolute;left:1140.5px;top:834.4px;width:1.4px;height:24px;background:#d6d8de;border-radius:0;box-sizing:border-box;"></div>
<svg style="position:absolute;left:1151px;top:840.9px;" width="20" height="12" viewBox="0 0 20 12"><path d="M7.5 2 H5.5 A4 4 0 0 0 5.5 10 H7.5 M12.5 2 H14.5 A4 4 0 0 1 14.5 10 H12.5 M6.5 6 H13.5" fill="none" stroke="#a6a8b3" stroke-width="1.9" stroke-linecap="round"/></svg>
<svg style="position:absolute;left:1181.6px;top:839.4px;" width="17" height="15" viewBox="0 0 17 15"><rect x="1" y="1" width="15" height="13" fill="none" stroke="#a6a8b3" stroke-width="1.8"/><path d="M3 12 L7 7.5 L10 10 L14 5.5" fill="none" stroke="#a6a8b3" stroke-width="1.6"/><circle cx="5" cy="4.5" r="1.2" fill="#a6a8b3"/></svg>
<svg style="position:absolute;left:1209.5px;top:837.9px;" width="18" height="18" viewBox="0 0 18 18"><circle cx="9" cy="9" r="7.6" fill="none" stroke="#a6a8b3" stroke-width="1.8"/><path d="M7.2 5.6 L12.2 9 L7.2 12.4 Z" fill="#a6a8b3"/></svg>
<svg style="position:absolute;left:1238.1px;top:837.4px;" width="17" height="18" viewBox="0 0 17 18"><path d="M1 1 H16 V12.5 H6 L1.5 17 Z" fill="none" stroke="#a6a8b3" stroke-width="1.8" stroke-linejoin="round"/><text x="8.5" y="8.8" font-family="Liberation Sans" font-size="7.5" fill="#a6a8b3" text-anchor="middle">?</text></svg>
<span id="t135" style="position:absolute;left:1267.00px;top:827.3px;font-size:16.8px;line-height:40px;font-weight:400;color:#2c2e37;white-space:nowrap;letter-spacing:0.180px;">+3</span>
<div style="position:absolute;left:1267px;top:859.3px;width:21px;height:0;border-top:1.2px dotted #8a8c96"></div>
<span id="t136" style="position:absolute;right:197.42px;top:827.3px;font-size:16.8px;line-height:40px;font-weight:400;color:#191b23;white-space:nowrap;letter-spacing:-0.121px;">221M</span>
<span id="t137" style="position:absolute;right:67.83px;top:827.3px;font-size:16.8px;line-height:40px;font-weight:400;color:#191b23;white-space:nowrap;letter-spacing:0.371px;">Last week</span>
<svg style="position:absolute;left:1537.8px;top:837.6999999999999px;" width="18" height="18" viewBox="0 0 18 18"><path d="M13.1 3.9 A6.7 6.7 0 1 0 13.3 13.4" fill="none" stroke="#1f6fd8" stroke-width="2.3" stroke-linecap="round"/><path d="M16.1 1.4 V6.4 H11.1" fill="none" stroke="#1f6fd8" stroke-width="2.3" stroke-linecap="round" stroke-linejoin="round"/></svg>
<div style="position:absolute;left:718px;top:320px;width:335.2px;height:473.6px;background:#fff;border-radius:8px;box-shadow:0 1px 12px rgba(25,27,35,0.12), 0 0 0 1px rgba(25,27,35,0.04);"></div>
<span id="t138" style="position:absolute;left:737.50px;top:334.4px;font-size:19.2px;line-height:40px;font-weight:700;color:#191b23;white-space:nowrap;letter-spacing:-0.062px;">Send:</span>
<span id="t139" style="position:absolute;left:737.50px;top:375.6px;font-size:16.8px;line-height:40px;font-weight:400;color:#191b23;white-space:nowrap;letter-spacing:0.332px;">Keywords: 2</span>
<span id="t140" style="position:absolute;left:737.50px;top:419.9px;font-size:19.2px;line-height:40px;font-weight:700;color:#191b23;white-space:nowrap;letter-spacing:0.198px;">To:</span>
<svg style="position:absolute;left:737.5px;top:471px;" width="19.5" height="19.5" viewBox="0 0 19.5 19.5"><circle cx="9.75" cy="9.75" r="9.75" fill="#3d8bef"/><circle cx="9.75" cy="9.75" r="3.6" fill="#fff"/></svg>
<span id="t141" style="position:absolute;left:766.60px;top:460.5px;font-size:16.8px;line-height:40px;font-weight:400;color:#191b23;white-space:nowrap;letter-spacing:0.435px;">Keyword Strategy Builder</span>
<span id="t142" style="position:absolute;left:766.60px;top:489px;font-size:16.8px;line-height:40px;font-weight:400;color:#6c6e79;white-space:nowrap;letter-spacing:0.347px;">Build your SEO strategy around</span>
<span id="t143" style="position:absolute;left:766.60px;top:513px;font-size:16.8px;line-height:40px;font-weight:400;color:#6c6e79;white-space:nowrap;letter-spacing:0.573px;">the selected keywords.</span>
<svg style="position:absolute;left:737.5px;top:561.2px;" width="19.5" height="19.5" viewBox="0 0 19.5 19.5"><circle cx="9.75" cy="9.75" r="9.1" fill="#fff" stroke="#c4c7cf" stroke-width="1.1"/></svg>
<span id="t144" style="position:absolute;left:766.60px;top:551.4px;font-size:16.8px;line-height:40px;font-weight:400;color:#191b23;white-space:nowrap;letter-spacing:0.388px;">Position Tracking</span>
<div style="position:absolute;left:911.5px;top:568.2px;width:7.5px;height:7.5px;background:#f0683a;border-radius:50%;box-sizing:border-box;"></div>
<span id="t145" style="position:absolute;left:766.60px;top:579.9px;font-size:16.8px;line-height:40px;font-weight:400;color:#6c6e79;white-space:nowrap;letter-spacing:0.417px;">Track website’s daily rankings for</span>
<span id="t146" style="position:absolute;left:766.60px;top:603.6px;font-size:16.8px;line-height:40px;font-weight:400;color:#6c6e79;white-space:nowrap;letter-spacing:0.580px;">your custom set of target</span>
<span id="t147" style="position:absolute;left:766.60px;top:627.6px;font-size:16.8px;line-height:40px;font-weight:400;color:#6c6e79;white-space:nowrap;letter-spacing:0.439px;">keywords.</span>
<div style="position:absolute;left:737.5px;top:677.8px;width:296.5px;height:1.3px;background:#c9cbd2;border-radius:0;box-sizing:border-box;"></div>
<svg style="position:absolute;left:737.5px;top:701px;" width="19.5" height="19.5" viewBox="0 0 19.5 19.5"><rect x="0.5" y="0.5" width="18.5" height="18.5" rx="4" fill="#fff" stroke="#cfd2d9" stroke-width="1.1"/></svg>
<span id="t148" style="position:absolute;left:766.60px;top:690.6px;font-size:16.8px;line-height:40px;font-weight:400;color:#191b23;white-space:nowrap;letter-spacing:0.456px;">Clear selection after sending</span>
<div style="position:absolute;left:737.5px;top:741.4px;width:66.3px;height:33px;background:#3d8bef;border-radius:6px;box-sizing:border-box;"></div>
<span id="t149" style="position:absolute;left:748.00px;top:739.3px;font-size:16.8px;line-height:40px;font-weight:400;color:#fff;white-space:nowrap;letter-spacing:0.603px;-webkit-text-stroke:0.35px #fff;">Apply</span>
</body></html>
